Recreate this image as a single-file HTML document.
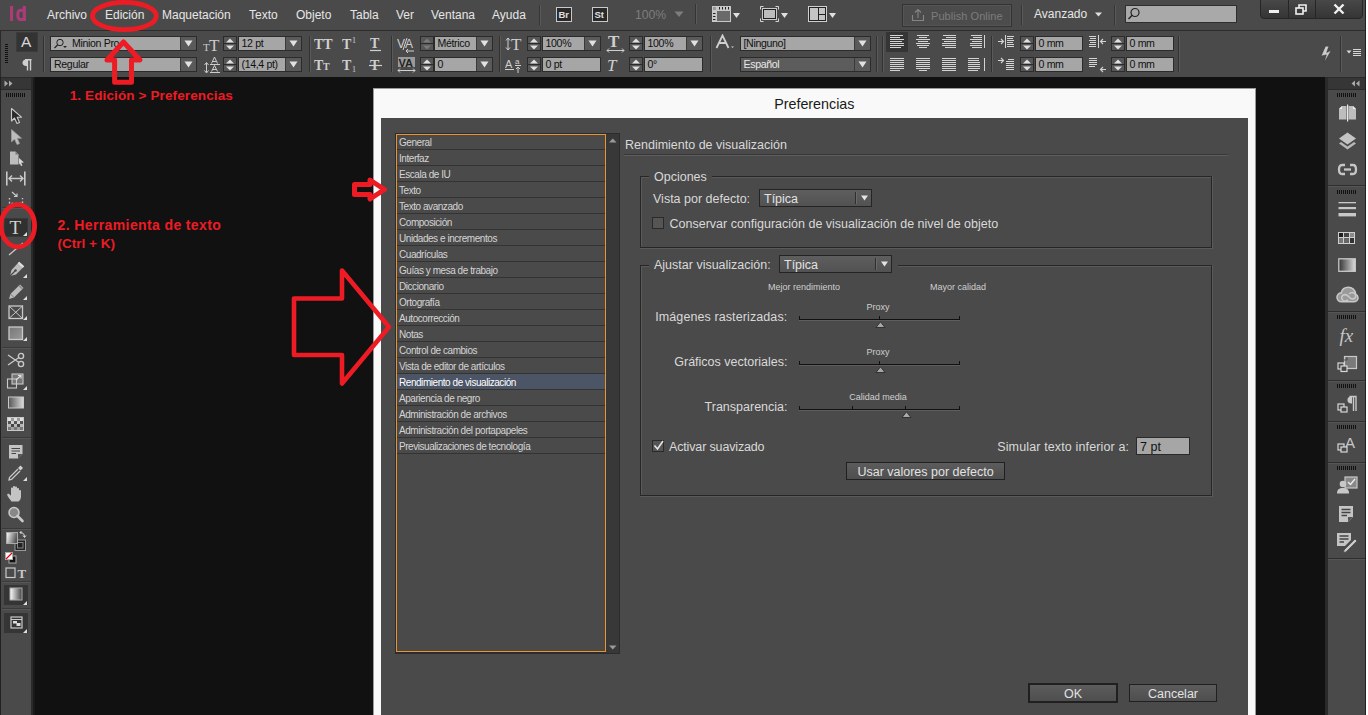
<!DOCTYPE html><html><head><meta charset="utf-8"><style>body{margin:0;width:1368px;height:715px;overflow:hidden;position:relative;background:#111;font-family:"Liberation Sans",sans-serif}</style></head><body><div style="position:absolute;left:0px;top:0px;width:1368px;height:30px;background:#4a4a4a"></div>
<div style="position:absolute;left:0px;top:30px;width:1368px;height:1px;background:#2c2c2c"></div>
<svg style="position:absolute;left:8px;top:4px;" width="22" height="20" viewBox="0 0 22 20"><rect x="2" y="2" width="3.1" height="15" fill="#ad3b78"/><rect x="14.8" y="2" width="3.1" height="15" fill="#ad3b78"/><path d="M15.5 6.2H12.5C10.5 6.2 9.8 8.5 9.8 11C9.8 13.8 10.8 15.6 12.8 15.6H15.5" fill="none" stroke="#ad3b78" stroke-width="3"/></svg>
<div style="position:absolute;left:47px;top:8.84px;font-size:12px;line-height:12px;color:#e6e6e6;font-weight:normal;letter-spacing:0px;white-space:pre;">Archivo</div>
<div style="position:absolute;left:105px;top:8.84px;font-size:12px;line-height:12px;color:#e6e6e6;font-weight:normal;letter-spacing:0px;white-space:pre;">Edición</div>
<div style="position:absolute;left:162px;top:8.84px;font-size:12px;line-height:12px;color:#e6e6e6;font-weight:normal;letter-spacing:0px;white-space:pre;">Maquetación</div>
<div style="position:absolute;left:249px;top:8.84px;font-size:12px;line-height:12px;color:#e6e6e6;font-weight:normal;letter-spacing:0px;white-space:pre;">Texto</div>
<div style="position:absolute;left:296px;top:8.84px;font-size:12px;line-height:12px;color:#e6e6e6;font-weight:normal;letter-spacing:0px;white-space:pre;">Objeto</div>
<div style="position:absolute;left:350px;top:8.84px;font-size:12px;line-height:12px;color:#e6e6e6;font-weight:normal;letter-spacing:0px;white-space:pre;">Tabla</div>
<div style="position:absolute;left:396px;top:8.84px;font-size:12px;line-height:12px;color:#e6e6e6;font-weight:normal;letter-spacing:0px;white-space:pre;">Ver</div>
<div style="position:absolute;left:431px;top:8.84px;font-size:12px;line-height:12px;color:#e6e6e6;font-weight:normal;letter-spacing:0px;white-space:pre;">Ventana</div>
<div style="position:absolute;left:492px;top:8.84px;font-size:12px;line-height:12px;color:#e6e6e6;font-weight:normal;letter-spacing:0px;white-space:pre;">Ayuda</div>
<div style="position:absolute;left:539px;top:5px;width:1px;height:20px;background:#353535"></div>
<div style="position:absolute;left:540px;top:5px;width:1px;height:20px;background:#5a5a5a"></div>
<div style="position:absolute;left:556px;top:7px;width:16px;height:15px;background:#c9c9c9"></div>
<div style="position:absolute;left:557px;top:8px;width:14px;height:13px;background:#2a2a2a"></div>
<div style="position:absolute;left:558.5px;top:10.46px;font-size:9.5px;line-height:9.5px;color:#e0e0e0;font-weight:bold;letter-spacing:0px;white-space:pre;">Br</div>
<div style="position:absolute;left:592px;top:7px;width:16px;height:15px;background:#c9c9c9"></div>
<div style="position:absolute;left:593px;top:8px;width:14px;height:13px;background:#2a2a2a"></div>
<div style="position:absolute;left:594.5px;top:10.46px;font-size:9.5px;line-height:9.5px;color:#e0e0e0;font-weight:bold;letter-spacing:0px;white-space:pre;">St</div>
<div style="position:absolute;left:635px;top:9.17px;font-size:12.2px;line-height:12.2px;color:#7d7d7d;font-weight:normal;letter-spacing:0px;white-space:pre;">100%</div>
<svg style="position:absolute;left:674px;top:11px;" width="10" height="7" viewBox="0 0 10 7"><path d="M0.5 0.5H9.5L5 6Z" fill="#7d7d7d"/></svg>
<div style="position:absolute;left:695px;top:4px;width:1px;height:20px;background:#353535"></div>
<div style="position:absolute;left:696px;top:4px;width:1px;height:20px;background:#5a5a5a"></div>
<svg style="position:absolute;left:712px;top:6px;" width="30" height="17" viewBox="0 0 30 17"><rect x="0" y="0" width="19" height="16" fill="#c8c8c8"/><rect x="5" y="5" width="13" height="10" fill="#6a6a6a"/><rect x="1" y="1" width="3" height="3" fill="#999"/><path d="M7.5 1V3.5M10.5 1V3.5M13.5 1V3.5M16.5 1V3.5M1 7.5H3.5M1 10.5H3.5M1 13.5H3.5" stroke="#222" stroke-width="1"/><path d="M21 7H28L24.5 12Z" fill="#e0e0e0"/></svg>
<svg style="position:absolute;left:760px;top:6px;" width="30" height="17" viewBox="0 0 30 17"><path d="M0.5 3.5V0.5H3.5M15.5 0.5H18.5V3.5M18.5 12.5V15.5H15.5M3.5 15.5H0.5V12.5" stroke="#d8d8d8" fill="none" stroke-width="1"/><rect x="2" y="2" width="15" height="12" fill="#c8c8c8"/><rect x="3" y="3" width="13" height="10" fill="#222"/><rect x="4" y="4" width="11" height="8" fill="#bcbcbc"/><path d="M21 7H28L24.5 12Z" fill="#e0e0e0"/></svg>
<svg style="position:absolute;left:808px;top:6px;" width="30" height="17" viewBox="0 0 30 17"><rect x="0" y="0" width="19" height="16" fill="#d0d0d0"/><rect x="1" y="1" width="17" height="14" fill="#222"/><rect x="2" y="2" width="8" height="12" fill="#c4c4c4"/><rect x="11" y="2" width="6" height="6" fill="#c4c4c4"/><rect x="11" y="9" width="6" height="5" fill="#c4c4c4"/><path d="M21 7H28L24.5 12Z" fill="#e0e0e0"/></svg>
<div style="position:absolute;left:902px;top:4px;width:110px;height:23px;background:#4c4c4c;box-shadow:inset 0 0 0 1px #333, inset 0 0 0 2px #555"></div>
<svg style="position:absolute;left:911px;top:8px;" width="14" height="14" viewBox="0 0 14 14"><path d="M1.5 7V12.5H12.5V7" stroke="#858585" fill="none" stroke-width="1.1"/><path d="M7 10V1.5M4 4.5L7 1.5L10 4.5" stroke="#858585" fill="none" stroke-width="1.1"/></svg>
<div style="position:absolute;left:931px;top:11.19px;font-size:11px;line-height:11px;color:#7c7c7c;font-weight:normal;letter-spacing:0.05px;white-space:pre;">Publish Online</div>
<div style="position:absolute;left:1021px;top:5px;width:1px;height:20px;background:#353535"></div>
<div style="position:absolute;left:1022px;top:5px;width:1px;height:20px;background:#5a5a5a"></div>
<div style="position:absolute;left:1034px;top:8.34px;font-size:12px;line-height:12px;color:#e6e6e6;font-weight:normal;letter-spacing:0px;white-space:pre;">Avanzado</div>
<svg style="position:absolute;left:1095px;top:12px;" width="8" height="5" viewBox="0 0 8 5"><path d="M0 0.5H7L3.5 4.5Z" fill="#e0e0e0"/></svg>
<div style="position:absolute;left:1114px;top:5px;width:1px;height:20px;background:#353535"></div>
<div style="position:absolute;left:1115px;top:5px;width:1px;height:20px;background:#5a5a5a"></div>
<div style="position:absolute;left:1125px;top:5px;width:112px;height:18px;background:#2e2e2e"></div>
<div style="position:absolute;left:1126px;top:6px;width:110px;height:16px;background:#a9a9a9"></div>
<svg style="position:absolute;left:1127px;top:7px;" width="14" height="14" viewBox="0 0 14 14"><circle cx="8" cy="5.5" r="4" fill="none" stroke="#222" stroke-width="1.2"/><path d="M5.2 8.3L1.5 12" stroke="#222" stroke-width="1.4"/></svg>
<div style="position:absolute;left:1260px;top:-3px;width:101px;height:20px;background:linear-gradient(#4a4a4a,#353535);border:1px solid #262626;border-radius:0 0 4px 4px"></div>
<div style="position:absolute;left:1288px;top:0px;width:1px;height:18px;background:#262626"></div>
<div style="position:absolute;left:1315px;top:0px;width:1px;height:18px;background:#262626"></div>
<div style="position:absolute;left:1269px;top:10px;width:10px;height:3px;background:#f0f0f0"></div>
<svg style="position:absolute;left:1295px;top:4px;" width="14" height="12" viewBox="0 0 14 12"><rect x="1" y="4" width="7" height="6" fill="none" stroke="#f0f0f0" stroke-width="1.6"/><path d="M4 4V1H11V7H8" fill="none" stroke="#f0f0f0" stroke-width="1.6"/></svg>
<svg style="position:absolute;left:1333px;top:3px;" width="12" height="12" viewBox="0 0 12 12"><path d="M1.5 1.5L10.5 10.5M10.5 1.5L1.5 10.5" stroke="#f0f0f0" stroke-width="2.4"/></svg>
<div style="position:absolute;left:0px;top:31px;width:1368px;height:46px;background:#4a4a4a"></div>
<div style="position:absolute;left:5px;top:44px;width:3px;height:1px;background:#111"></div>
<div style="position:absolute;left:5px;top:46px;width:3px;height:1px;background:#111"></div>
<div style="position:absolute;left:5px;top:48px;width:3px;height:1px;background:#111"></div>
<div style="position:absolute;left:5px;top:50px;width:3px;height:1px;background:#111"></div>
<div style="position:absolute;left:5px;top:52px;width:3px;height:1px;background:#111"></div>
<div style="position:absolute;left:5px;top:54px;width:3px;height:1px;background:#111"></div>
<div style="position:absolute;left:5px;top:56px;width:3px;height:1px;background:#111"></div>
<div style="position:absolute;left:5px;top:58px;width:3px;height:1px;background:#111"></div>
<div style="position:absolute;left:5px;top:60px;width:3px;height:1px;background:#111"></div>
<div style="position:absolute;left:5px;top:62px;width:3px;height:1px;background:#111"></div>
<div style="position:absolute;left:0px;top:31px;width:1px;height:46px;background:#2a2a2a"></div>
<div style="position:absolute;left:16px;top:32px;width:22px;height:20px;background:#333;box-shadow:inset 0 0 0 1px #3b3b3b"></div>
<div style="position:absolute;left:21px;top:34.48px;font-size:15.5px;line-height:15.5px;color:#d8d8d8;font-weight:normal;letter-spacing:0px;white-space:pre;">A</div>
<svg style="position:absolute;left:22px;top:59px;" width="10" height="12" viewBox="0 0 10 12"><path d="M5 0.5C1.5 0.5 0.5 2 0.5 3.8C0.5 5.6 1.5 7 5 7Z" fill="#cfcfcf"/><path d="M3 0.8H9.5M5.5 0.8V11.5M8.5 0.8V11.5" stroke="#cfcfcf" stroke-width="1.4" fill="none"/></svg>
<div style="position:absolute;left:43px;top:36px;width:1px;height:36px;background:#333"></div>
<div style="position:absolute;left:44px;top:36px;width:1px;height:36px;background:#5a5a5a"></div>
<div style="position:absolute;left:50px;top:36px;width:147px;height:15px;background:#2b2b2b"></div>
<div style="position:absolute;left:51px;top:37px;width:145px;height:13px;background:#a6a6a6"></div>
<div style="position:absolute;left:180px;top:37px;width:16px;height:13px;background:#5a5a5a"></div>
<div style="position:absolute;left:180px;top:37px;width:1px;height:13px;background:#3a3a3a"></div>
<svg style="position:absolute;left:184px;top:40px;" width="9" height="7" viewBox="0 0 9 7"><path d="M0.5 0.5H8.5L4.5 6.5Z" fill="#e2e2e2"/></svg>
<div style="position:absolute;left:72px;top:38.03px;font-size:10.6px;line-height:10.6px;color:#111;font-weight:normal;letter-spacing:-0.35px;white-space:pre;">Minion Pro</div>
<svg style="position:absolute;left:53px;top:38px;" width="16" height="11" viewBox="0 0 16 11"><circle cx="7" cy="4.5" r="3.2" fill="none" stroke="#222" stroke-width="1"/><path d="M4.8 6.8L1.5 10" stroke="#222" stroke-width="1.2"/><path d="M10 8H14L12 10Z" fill="#222"/></svg>
<div style="position:absolute;left:50px;top:57px;width:147px;height:15px;background:#2b2b2b"></div>
<div style="position:absolute;left:51px;top:58px;width:145px;height:13px;background:#a6a6a6"></div>
<div style="position:absolute;left:180px;top:58px;width:16px;height:13px;background:#5a5a5a"></div>
<div style="position:absolute;left:180px;top:58px;width:1px;height:13px;background:#3a3a3a"></div>
<svg style="position:absolute;left:184px;top:61px;" width="9" height="7" viewBox="0 0 9 7"><path d="M0.5 0.5H8.5L4.5 6.5Z" fill="#e2e2e2"/></svg>
<div style="position:absolute;left:54px;top:59.03px;font-size:10.6px;line-height:10.6px;color:#111;font-weight:normal;letter-spacing:-0.35px;white-space:pre;">Regular</div>
<svg style="position:absolute;left:203px;top:37px;" width="19" height="15" viewBox="0 0 19 15"><text x="0" y="14" font-family="Liberation Serif" font-size="11" fill="#ccc">T</text><text x="6" y="14" font-family="Liberation Serif" font-size="17" fill="#ccc">T</text></svg>
<svg style="position:absolute;left:203px;top:56px;" width="19" height="18" viewBox="0 0 19 18"><path d="M3.5 7V16.5M1.5 9L3.5 6.5L5.5 9M1.5 14.5L3.5 17L5.5 14.5" stroke="#ccc" fill="none" stroke-width="1"/><path d="M8.5 7.5L11.5 1L14.5 7.5M9.5 5.5H13.5" stroke="#ccc" fill="none" stroke-width="1"/><path d="M7 8.5H17M7 16.5H17" stroke="#ccc" stroke-width="1"/><path d="M8.5 15.5L11.5 9.5L14.5 15.5M9.5 13.5H13.5" stroke="#ccc" fill="none" stroke-width="1"/></svg>
<div style="position:absolute;left:223px;top:36px;width:14px;height:15px;background:#2b2b2b"></div>
<div style="position:absolute;left:224px;top:37px;width:12px;height:6px;background:#575757"></div>
<div style="position:absolute;left:224px;top:44px;width:12px;height:6px;background:#575757"></div>
<svg style="position:absolute;left:226px;top:38px;" width="8" height="5" viewBox="0 0 8 5"><path d="M0 4.5H8L4 0.5Z" fill="#e0e0e0"/></svg>
<svg style="position:absolute;left:226px;top:45px;" width="8" height="5" viewBox="0 0 8 5"><path d="M0 0.5H8L4 4.5Z" fill="#e0e0e0"/></svg>
<div style="position:absolute;left:223px;top:57px;width:14px;height:15px;background:#2b2b2b"></div>
<div style="position:absolute;left:224px;top:58px;width:12px;height:6px;background:#575757"></div>
<div style="position:absolute;left:224px;top:65px;width:12px;height:6px;background:#575757"></div>
<svg style="position:absolute;left:226px;top:59px;" width="8" height="5" viewBox="0 0 8 5"><path d="M0 4.5H8L4 0.5Z" fill="#e0e0e0"/></svg>
<svg style="position:absolute;left:226px;top:66px;" width="8" height="5" viewBox="0 0 8 5"><path d="M0 0.5H8L4 4.5Z" fill="#e0e0e0"/></svg>
<div style="position:absolute;left:238px;top:36px;width:64px;height:15px;background:#2b2b2b"></div>
<div style="position:absolute;left:239px;top:37px;width:62px;height:13px;background:#a6a6a6"></div>
<div style="position:absolute;left:285px;top:37px;width:16px;height:13px;background:#5a5a5a"></div>
<div style="position:absolute;left:285px;top:37px;width:1px;height:13px;background:#3a3a3a"></div>
<svg style="position:absolute;left:289px;top:40px;" width="9" height="7" viewBox="0 0 9 7"><path d="M0.5 0.5H8.5L4.5 6.5Z" fill="#e2e2e2"/></svg>
<div style="position:absolute;left:241.5px;top:38.03px;font-size:10.6px;line-height:10.6px;color:#111;font-weight:normal;letter-spacing:-0.35px;white-space:pre;">12 pt</div>
<div style="position:absolute;left:238px;top:57px;width:64px;height:15px;background:#2b2b2b"></div>
<div style="position:absolute;left:239px;top:58px;width:62px;height:13px;background:#a6a6a6"></div>
<div style="position:absolute;left:285px;top:58px;width:16px;height:13px;background:#5a5a5a"></div>
<div style="position:absolute;left:285px;top:58px;width:1px;height:13px;background:#3a3a3a"></div>
<svg style="position:absolute;left:289px;top:61px;" width="9" height="7" viewBox="0 0 9 7"><path d="M0.5 0.5H8.5L4.5 6.5Z" fill="#e2e2e2"/></svg>
<div style="position:absolute;left:241.5px;top:59.03px;font-size:10.6px;line-height:10.6px;color:#111;font-weight:normal;letter-spacing:-0.35px;white-space:pre;">(14,4 pt)</div>
<div style="position:absolute;left:309px;top:36px;width:1px;height:36px;background:#333"></div>
<div style="position:absolute;left:310px;top:36px;width:1px;height:36px;background:#5a5a5a"></div>
<svg style="position:absolute;left:314px;top:36px;" width="20" height="16" viewBox="0 0 20 16"><text x="0" y="13" font-family="Liberation Serif" font-size="14" fill="#cfcfcf" font-weight="bold">TT</text></svg>
<svg style="position:absolute;left:342px;top:36px;" width="20" height="16" viewBox="0 0 20 16"><text x="0" y="13" font-family="Liberation Serif" font-size="14" fill="#cfcfcf" font-weight="bold">T</text><text x="10" y="7" font-family="Liberation Serif" font-size="8" fill="#cfcfcf">1</text></svg>
<svg style="position:absolute;left:369px;top:36px;" width="16" height="16" viewBox="0 0 16 16"><text x="1" y="12" font-family="Liberation Serif" font-size="14" fill="#cfcfcf" font-weight="bold">T</text><path d="M1 14.5H12" stroke="#cfcfcf" stroke-width="1.2"/></svg>
<svg style="position:absolute;left:314px;top:57px;" width="20" height="16" viewBox="0 0 20 16"><text x="0" y="13" font-family="Liberation Serif" font-size="14" fill="#cfcfcf" font-weight="bold">T</text><text x="9" y="13" font-family="Liberation Serif" font-size="10" fill="#cfcfcf" font-weight="bold">T</text></svg>
<svg style="position:absolute;left:342px;top:57px;" width="20" height="16" viewBox="0 0 20 16"><text x="0" y="13" font-family="Liberation Serif" font-size="14" fill="#cfcfcf" font-weight="bold">T</text><text x="10" y="15" font-family="Liberation Serif" font-size="8" fill="#cfcfcf">1</text></svg>
<svg style="position:absolute;left:369px;top:57px;" width="16" height="16" viewBox="0 0 16 16"><text x="1" y="13" font-family="Liberation Serif" font-size="14" fill="#cfcfcf" font-weight="bold">T</text><path d="M0 8.5H13" stroke="#cfcfcf" stroke-width="1.2"/></svg>
<div style="position:absolute;left:391px;top:36px;width:1px;height:36px;background:#333"></div>
<div style="position:absolute;left:392px;top:36px;width:1px;height:36px;background:#5a5a5a"></div>
<svg style="position:absolute;left:397px;top:36px;" width="20" height="17" viewBox="0 0 20 17"><text x="0" y="12" font-family="Liberation Sans" font-size="12" fill="#cfcfcf">V</text><text x="8" y="12" font-family="Liberation Sans" font-size="12" fill="#cfcfcf">A</text><path d="M6 14L10 2" stroke="#cfcfcf" stroke-width="1"/><path d="M17 15H9M11 13L9 15L11 17" stroke="#cfcfcf" fill="none" stroke-width="1"/></svg>
<svg style="position:absolute;left:397px;top:56px;" width="20" height="17" viewBox="0 0 20 17"><rect x="1" y="1" width="17" height="10" fill="#9a9a9a"/><text x="1.5" y="10.5" font-family="Liberation Sans" font-size="11" font-weight="bold" fill="#222">VA</text><path d="M1 14.5H18M3 12.5L1 14.5L3 16.5M16 12.5L18 14.5L16 16.5" stroke="#cfcfcf" fill="none" stroke-width="1"/></svg>
<div style="position:absolute;left:420px;top:36px;width:14px;height:15px;background:#2b2b2b"></div>
<div style="position:absolute;left:421px;top:37px;width:12px;height:6px;background:#575757"></div>
<div style="position:absolute;left:421px;top:44px;width:12px;height:6px;background:#575757"></div>
<svg style="position:absolute;left:423px;top:38px;" width="8" height="5" viewBox="0 0 8 5"><path d="M0 4.5H8L4 0.5Z" fill="#7a7a7a"/></svg>
<svg style="position:absolute;left:423px;top:45px;" width="8" height="5" viewBox="0 0 8 5"><path d="M0 0.5H8L4 4.5Z" fill="#7a7a7a"/></svg>
<div style="position:absolute;left:420px;top:57px;width:14px;height:15px;background:#2b2b2b"></div>
<div style="position:absolute;left:421px;top:58px;width:12px;height:6px;background:#575757"></div>
<div style="position:absolute;left:421px;top:65px;width:12px;height:6px;background:#575757"></div>
<svg style="position:absolute;left:423px;top:59px;" width="8" height="5" viewBox="0 0 8 5"><path d="M0 4.5H8L4 0.5Z" fill="#e0e0e0"/></svg>
<svg style="position:absolute;left:423px;top:66px;" width="8" height="5" viewBox="0 0 8 5"><path d="M0 0.5H8L4 4.5Z" fill="#e0e0e0"/></svg>
<div style="position:absolute;left:434px;top:36px;width:59px;height:15px;background:#2b2b2b"></div>
<div style="position:absolute;left:435px;top:37px;width:57px;height:13px;background:#a6a6a6"></div>
<div style="position:absolute;left:476px;top:37px;width:16px;height:13px;background:#5a5a5a"></div>
<div style="position:absolute;left:476px;top:37px;width:1px;height:13px;background:#3a3a3a"></div>
<svg style="position:absolute;left:480px;top:40px;" width="9" height="7" viewBox="0 0 9 7"><path d="M0.5 0.5H8.5L4.5 6.5Z" fill="#e2e2e2"/></svg>
<div style="position:absolute;left:437.5px;top:38.03px;font-size:10.6px;line-height:10.6px;color:#111;font-weight:normal;letter-spacing:-0.35px;white-space:pre;">Métrico</div>
<div style="position:absolute;left:434px;top:57px;width:59px;height:15px;background:#2b2b2b"></div>
<div style="position:absolute;left:435px;top:58px;width:57px;height:13px;background:#a6a6a6"></div>
<div style="position:absolute;left:476px;top:58px;width:16px;height:13px;background:#5a5a5a"></div>
<div style="position:absolute;left:476px;top:58px;width:1px;height:13px;background:#3a3a3a"></div>
<svg style="position:absolute;left:480px;top:61px;" width="9" height="7" viewBox="0 0 9 7"><path d="M0.5 0.5H8.5L4.5 6.5Z" fill="#e2e2e2"/></svg>
<div style="position:absolute;left:437.5px;top:59.03px;font-size:10.6px;line-height:10.6px;color:#111;font-weight:normal;letter-spacing:-0.35px;white-space:pre;">0</div>
<div style="position:absolute;left:499px;top:36px;width:1px;height:36px;background:#333"></div>
<div style="position:absolute;left:500px;top:36px;width:1px;height:36px;background:#5a5a5a"></div>
<svg style="position:absolute;left:505px;top:36px;" width="20" height="16" viewBox="0 0 20 16"><path d="M3 2V14M1 4.5L3 2L5 4.5M1 11.5L3 14L5 11.5" stroke="#cfcfcf" fill="none" stroke-width="1"/><text x="6" y="14" font-family="Liberation Serif" font-size="17" fill="#cfcfcf">T</text></svg>
<svg style="position:absolute;left:505px;top:57px;" width="20" height="16" viewBox="0 0 20 16"><text x="0" y="11" font-family="Liberation Sans" font-size="11" fill="#cfcfcf">A</text><text x="10" y="7" font-family="Liberation Sans" font-size="8" fill="#cfcfcf">a</text><path d="M0 12.5H9M10 8.5H16M13 10V16M11 12L13 10L15 12" stroke="#cfcfcf" fill="none" stroke-width="1"/></svg>
<div style="position:absolute;left:527px;top:36px;width:14px;height:15px;background:#2b2b2b"></div>
<div style="position:absolute;left:528px;top:37px;width:12px;height:6px;background:#575757"></div>
<div style="position:absolute;left:528px;top:44px;width:12px;height:6px;background:#575757"></div>
<svg style="position:absolute;left:530px;top:38px;" width="8" height="5" viewBox="0 0 8 5"><path d="M0 4.5H8L4 0.5Z" fill="#e0e0e0"/></svg>
<svg style="position:absolute;left:530px;top:45px;" width="8" height="5" viewBox="0 0 8 5"><path d="M0 0.5H8L4 4.5Z" fill="#e0e0e0"/></svg>
<div style="position:absolute;left:527px;top:57px;width:14px;height:15px;background:#2b2b2b"></div>
<div style="position:absolute;left:528px;top:58px;width:12px;height:6px;background:#575757"></div>
<div style="position:absolute;left:528px;top:65px;width:12px;height:6px;background:#575757"></div>
<svg style="position:absolute;left:530px;top:59px;" width="8" height="5" viewBox="0 0 8 5"><path d="M0 4.5H8L4 0.5Z" fill="#e0e0e0"/></svg>
<svg style="position:absolute;left:530px;top:66px;" width="8" height="5" viewBox="0 0 8 5"><path d="M0 0.5H8L4 4.5Z" fill="#e0e0e0"/></svg>
<div style="position:absolute;left:542px;top:36px;width:59px;height:15px;background:#2b2b2b"></div>
<div style="position:absolute;left:543px;top:37px;width:57px;height:13px;background:#a6a6a6"></div>
<div style="position:absolute;left:584px;top:37px;width:16px;height:13px;background:#5a5a5a"></div>
<div style="position:absolute;left:584px;top:37px;width:1px;height:13px;background:#3a3a3a"></div>
<svg style="position:absolute;left:588px;top:40px;" width="9" height="7" viewBox="0 0 9 7"><path d="M0.5 0.5H8.5L4.5 6.5Z" fill="#e2e2e2"/></svg>
<div style="position:absolute;left:545.5px;top:38.03px;font-size:10.6px;line-height:10.6px;color:#111;font-weight:normal;letter-spacing:-0.35px;white-space:pre;">100%</div>
<div style="position:absolute;left:542px;top:57px;width:59px;height:15px;background:#2b2b2b"></div>
<div style="position:absolute;left:543px;top:58px;width:57px;height:13px;background:#a6a6a6"></div>
<div style="position:absolute;left:545.5px;top:59.03px;font-size:10.6px;line-height:10.6px;color:#111;font-weight:normal;letter-spacing:-0.35px;white-space:pre;">0 pt</div>
<svg style="position:absolute;left:606px;top:34px;" width="20" height="20" viewBox="0 0 20 20"><text x="2" y="13" font-family="Liberation Serif" font-size="17" fill="#cfcfcf" font-weight="bold">T</text><path d="M1 16.5H18M3 14.5L1 16.5L3 18.5M16 14.5L18 16.5L16 18.5" stroke="#cfcfcf" fill="none" stroke-width="1"/></svg>
<svg style="position:absolute;left:606px;top:56px;" width="20" height="17" viewBox="0 0 20 17"><text x="1" y="15" font-family="Liberation Serif" font-size="17" font-style="italic" fill="#cfcfcf">T</text></svg>
<div style="position:absolute;left:629px;top:36px;width:14px;height:15px;background:#2b2b2b"></div>
<div style="position:absolute;left:630px;top:37px;width:12px;height:6px;background:#575757"></div>
<div style="position:absolute;left:630px;top:44px;width:12px;height:6px;background:#575757"></div>
<svg style="position:absolute;left:632px;top:38px;" width="8" height="5" viewBox="0 0 8 5"><path d="M0 4.5H8L4 0.5Z" fill="#e0e0e0"/></svg>
<svg style="position:absolute;left:632px;top:45px;" width="8" height="5" viewBox="0 0 8 5"><path d="M0 0.5H8L4 4.5Z" fill="#e0e0e0"/></svg>
<div style="position:absolute;left:629px;top:57px;width:14px;height:15px;background:#2b2b2b"></div>
<div style="position:absolute;left:630px;top:58px;width:12px;height:6px;background:#575757"></div>
<div style="position:absolute;left:630px;top:65px;width:12px;height:6px;background:#575757"></div>
<svg style="position:absolute;left:632px;top:59px;" width="8" height="5" viewBox="0 0 8 5"><path d="M0 4.5H8L4 0.5Z" fill="#e0e0e0"/></svg>
<svg style="position:absolute;left:632px;top:66px;" width="8" height="5" viewBox="0 0 8 5"><path d="M0 0.5H8L4 4.5Z" fill="#e0e0e0"/></svg>
<div style="position:absolute;left:644px;top:36px;width:59px;height:15px;background:#2b2b2b"></div>
<div style="position:absolute;left:645px;top:37px;width:57px;height:13px;background:#a6a6a6"></div>
<div style="position:absolute;left:686px;top:37px;width:16px;height:13px;background:#5a5a5a"></div>
<div style="position:absolute;left:686px;top:37px;width:1px;height:13px;background:#3a3a3a"></div>
<svg style="position:absolute;left:690px;top:40px;" width="9" height="7" viewBox="0 0 9 7"><path d="M0.5 0.5H8.5L4.5 6.5Z" fill="#e2e2e2"/></svg>
<div style="position:absolute;left:647.5px;top:38.03px;font-size:10.6px;line-height:10.6px;color:#111;font-weight:normal;letter-spacing:-0.35px;white-space:pre;">100%</div>
<div style="position:absolute;left:644px;top:57px;width:59px;height:15px;background:#2b2b2b"></div>
<div style="position:absolute;left:645px;top:58px;width:57px;height:13px;background:#a6a6a6"></div>
<div style="position:absolute;left:647.5px;top:59.03px;font-size:10.6px;line-height:10.6px;color:#111;font-weight:normal;letter-spacing:-0.35px;white-space:pre;">0°</div>
<div style="position:absolute;left:710px;top:36px;width:1px;height:36px;background:#333"></div>
<div style="position:absolute;left:711px;top:36px;width:1px;height:36px;background:#5a5a5a"></div>
<svg style="position:absolute;left:715px;top:34px;" width="22" height="16" viewBox="0 0 22 16"><path d="M1.5 14L7.5 1.5L13.5 14M4 9H11" fill="none" stroke="#cfcfcf" stroke-width="1.8"/><path d="M16 12.5H19L17.5 14Z" fill="#cfcfcf"/></svg>
<div style="position:absolute;left:740px;top:36px;width:131px;height:15px;background:#2b2b2b"></div>
<div style="position:absolute;left:741px;top:37px;width:129px;height:13px;background:#a6a6a6"></div>
<div style="position:absolute;left:854px;top:37px;width:16px;height:13px;background:#5a5a5a"></div>
<div style="position:absolute;left:854px;top:37px;width:1px;height:13px;background:#3a3a3a"></div>
<svg style="position:absolute;left:858px;top:40px;" width="9" height="7" viewBox="0 0 9 7"><path d="M0.5 0.5H8.5L4.5 6.5Z" fill="#e2e2e2"/></svg>
<div style="position:absolute;left:743.5px;top:38.03px;font-size:10.6px;line-height:10.6px;color:#111;font-weight:normal;letter-spacing:-0.35px;white-space:pre;">[Ninguno]</div>
<div style="position:absolute;left:740px;top:57px;width:131px;height:15px;background:#2b2b2b"></div>
<div style="position:absolute;left:741px;top:58px;width:129px;height:13px;background:#5c5c5c"></div>
<div style="position:absolute;left:854px;top:58px;width:16px;height:13px;background:#5a5a5a"></div>
<div style="position:absolute;left:854px;top:58px;width:1px;height:13px;background:#3a3a3a"></div>
<svg style="position:absolute;left:858px;top:61px;" width="9" height="7" viewBox="0 0 9 7"><path d="M0.5 0.5H8.5L4.5 6.5Z" fill="#e2e2e2"/></svg>
<div style="position:absolute;left:743.5px;top:59.03px;font-size:10.6px;line-height:10.6px;color:#e8e8e8;font-weight:normal;letter-spacing:-0.35px;white-space:pre;">Español</div>
<div style="position:absolute;left:876px;top:36px;width:1px;height:36px;background:#333"></div>
<div style="position:absolute;left:877px;top:36px;width:1px;height:36px;background:#5a5a5a"></div>
<div style="position:absolute;left:882px;top:36px;width:1px;height:36px;background:#333"></div>
<div style="position:absolute;left:883px;top:36px;width:1px;height:36px;background:#5a5a5a"></div>
<div style="position:absolute;left:886px;top:32px;width:22px;height:20px;background:#353535"></div>
<svg style="position:absolute;left:890px;top:35px;" width="18" height="14" viewBox="0 0 18 14"><rect x="0" y="0" width="13" height="1" fill="#d4d4d4"/><rect x="0" y="2" width="10" height="1" fill="#d4d4d4"/><rect x="0" y="4" width="14" height="1" fill="#d4d4d4"/><rect x="0" y="6" width="12" height="1" fill="#d4d4d4"/><rect x="0" y="8" width="14" height="1" fill="#d4d4d4"/><rect x="0" y="10" width="14" height="1" fill="#d4d4d4"/><rect x="0" y="12" width="11" height="1" fill="#d4d4d4"/></svg>
<svg style="position:absolute;left:916px;top:35px;" width="18" height="14" viewBox="0 0 18 14"><rect x="1.0" y="0" width="12" height="1" fill="#d4d4d4"/><rect x="3.0" y="2" width="8" height="1" fill="#d4d4d4"/><rect x="0.0" y="4" width="14" height="1" fill="#d4d4d4"/><rect x="2.0" y="6" width="10" height="1" fill="#d4d4d4"/><rect x="0.0" y="8" width="14" height="1" fill="#d4d4d4"/><rect x="1.0" y="10" width="12" height="1" fill="#d4d4d4"/><rect x="3.0" y="12" width="8" height="1" fill="#d4d4d4"/></svg>
<svg style="position:absolute;left:942px;top:35px;" width="18" height="14" viewBox="0 0 18 14"><rect x="1" y="0" width="13" height="1" fill="#d4d4d4"/><rect x="4" y="2" width="10" height="1" fill="#d4d4d4"/><rect x="0" y="4" width="14" height="1" fill="#d4d4d4"/><rect x="2" y="6" width="12" height="1" fill="#d4d4d4"/><rect x="0" y="8" width="14" height="1" fill="#d4d4d4"/><rect x="0" y="10" width="14" height="1" fill="#d4d4d4"/><rect x="3" y="12" width="11" height="1" fill="#d4d4d4"/></svg>
<svg style="position:absolute;left:968px;top:35px;" width="18" height="14" viewBox="0 0 18 14"><rect x="3" y="0" width="11" height="1" fill="#d4d4d4"/><rect x="5" y="2" width="9" height="1" fill="#d4d4d4"/><rect x="2" y="4" width="12" height="1" fill="#d4d4d4"/><rect x="4" y="6" width="10" height="1" fill="#d4d4d4"/><rect x="2" y="8" width="12" height="1" fill="#d4d4d4"/><rect x="2" y="10" width="12" height="1" fill="#d4d4d4"/><rect x="4" y="12" width="10" height="1" fill="#d4d4d4"/><rect x="16" y="0" width="1" height="13" fill="#d4d4d4"/></svg>
<svg style="position:absolute;left:890px;top:58px;" width="18" height="14" viewBox="0 0 18 14"><rect x="0" y="0" width="14" height="1" fill="#d4d4d4"/><rect x="0" y="2" width="14" height="1" fill="#d4d4d4"/><rect x="0" y="4" width="14" height="1" fill="#d4d4d4"/><rect x="0" y="6" width="14" height="1" fill="#d4d4d4"/><rect x="0" y="8" width="14" height="1" fill="#d4d4d4"/><rect x="0" y="10" width="14" height="1" fill="#d4d4d4"/><rect x="0" y="12" width="10" height="1" fill="#d4d4d4"/></svg>
<svg style="position:absolute;left:916px;top:58px;" width="18" height="14" viewBox="0 0 18 14"><rect x="0.0" y="0" width="14" height="1" fill="#d4d4d4"/><rect x="0.0" y="2" width="14" height="1" fill="#d4d4d4"/><rect x="0.0" y="4" width="14" height="1" fill="#d4d4d4"/><rect x="0.0" y="6" width="14" height="1" fill="#d4d4d4"/><rect x="0.0" y="8" width="14" height="1" fill="#d4d4d4"/><rect x="0.0" y="10" width="14" height="1" fill="#d4d4d4"/><rect x="3.0" y="12" width="8" height="1" fill="#d4d4d4"/></svg>
<svg style="position:absolute;left:942px;top:58px;" width="18" height="14" viewBox="0 0 18 14"><rect x="0" y="0" width="14" height="1" fill="#d4d4d4"/><rect x="0" y="2" width="14" height="1" fill="#d4d4d4"/><rect x="0" y="4" width="14" height="1" fill="#d4d4d4"/><rect x="0" y="6" width="14" height="1" fill="#d4d4d4"/><rect x="0" y="8" width="14" height="1" fill="#d4d4d4"/><rect x="0" y="10" width="14" height="1" fill="#d4d4d4"/><rect x="0" y="12" width="14" height="1" fill="#d4d4d4"/></svg>
<svg style="position:absolute;left:968px;top:58px;" width="18" height="14" viewBox="0 0 18 14"><rect x="0" y="0" width="11" height="1" fill="#d4d4d4"/><rect x="0" y="2" width="11" height="1" fill="#d4d4d4"/><rect x="0" y="4" width="12" height="1" fill="#d4d4d4"/><rect x="0" y="6" width="12" height="1" fill="#d4d4d4"/><rect x="0" y="8" width="12" height="1" fill="#d4d4d4"/><rect x="0" y="10" width="12" height="1" fill="#d4d4d4"/><rect x="0" y="12" width="10" height="1" fill="#d4d4d4"/><rect x="16" y="0" width="1" height="13" fill="#d4d4d4"/></svg>
<div style="position:absolute;left:991px;top:36px;width:1px;height:36px;background:#333"></div>
<div style="position:absolute;left:992px;top:36px;width:1px;height:36px;background:#5a5a5a"></div>
<svg style="position:absolute;left:998px;top:35px;" width="18" height="14" viewBox="0 0 18 14"><path d="M0 6.5H5M3 4L5.5 6.5L3 9" stroke="#d4d4d4" fill="none" stroke-width="1.1"/><rect x="7" y="0" width="1" height="13" fill="#d4d4d4"/><rect x="9" y="1" width="7" height="1" fill="#d4d4d4"/><rect x="9" y="3" width="6" height="1" fill="#d4d4d4"/><rect x="9" y="5" width="7" height="1" fill="#d4d4d4"/><rect x="9" y="7" width="6" height="1" fill="#d4d4d4"/><rect x="9" y="9" width="7" height="1" fill="#d4d4d4"/><rect x="9" y="11" width="7" height="1" fill="#d4d4d4"/></svg>
<svg style="position:absolute;left:998px;top:57px;" width="18" height="15" viewBox="0 0 18 15"><path d="M0 3.5H5M3 1L5.5 3.5L3 6" stroke="#d4d4d4" fill="none" stroke-width="1.1"/><rect x="10" y="2" width="6" height="1" fill="#d4d4d4"/><rect x="8" y="4" width="8" height="1" fill="#d4d4d4"/><rect x="8" y="6" width="8" height="1" fill="#d4d4d4"/><rect x="8" y="8" width="8" height="1" fill="#d4d4d4"/><rect x="8" y="10" width="8" height="1" fill="#d4d4d4"/><rect x="8" y="12" width="8" height="1" fill="#d4d4d4"/></svg>
<div style="position:absolute;left:1020px;top:36px;width:14px;height:15px;background:#2b2b2b"></div>
<div style="position:absolute;left:1021px;top:37px;width:12px;height:6px;background:#575757"></div>
<div style="position:absolute;left:1021px;top:44px;width:12px;height:6px;background:#575757"></div>
<svg style="position:absolute;left:1023px;top:38px;" width="8" height="5" viewBox="0 0 8 5"><path d="M0 4.5H8L4 0.5Z" fill="#e0e0e0"/></svg>
<svg style="position:absolute;left:1023px;top:45px;" width="8" height="5" viewBox="0 0 8 5"><path d="M0 0.5H8L4 4.5Z" fill="#e0e0e0"/></svg>
<div style="position:absolute;left:1020px;top:57px;width:14px;height:15px;background:#2b2b2b"></div>
<div style="position:absolute;left:1021px;top:58px;width:12px;height:6px;background:#575757"></div>
<div style="position:absolute;left:1021px;top:65px;width:12px;height:6px;background:#575757"></div>
<svg style="position:absolute;left:1023px;top:59px;" width="8" height="5" viewBox="0 0 8 5"><path d="M0 4.5H8L4 0.5Z" fill="#e0e0e0"/></svg>
<svg style="position:absolute;left:1023px;top:66px;" width="8" height="5" viewBox="0 0 8 5"><path d="M0 0.5H8L4 4.5Z" fill="#e0e0e0"/></svg>
<div style="position:absolute;left:1035px;top:36px;width:48px;height:15px;background:#2b2b2b"></div>
<div style="position:absolute;left:1036px;top:37px;width:46px;height:13px;background:#a6a6a6"></div>
<div style="position:absolute;left:1038.5px;top:38.03px;font-size:10.6px;line-height:10.6px;color:#111;font-weight:normal;letter-spacing:-0.35px;white-space:pre;">0 mm</div>
<div style="position:absolute;left:1035px;top:57px;width:48px;height:15px;background:#2b2b2b"></div>
<div style="position:absolute;left:1036px;top:58px;width:46px;height:13px;background:#a6a6a6"></div>
<div style="position:absolute;left:1038.5px;top:59.03px;font-size:10.6px;line-height:10.6px;color:#111;font-weight:normal;letter-spacing:-0.35px;white-space:pre;">0 mm</div>
<svg style="position:absolute;left:1089px;top:35px;" width="18" height="14" viewBox="0 0 18 14"><rect x="0" y="1" width="7" height="1" fill="#d4d4d4"/><rect x="1" y="3" width="6" height="1" fill="#d4d4d4"/><rect x="0" y="5" width="7" height="1" fill="#d4d4d4"/><rect x="1" y="7" width="6" height="1" fill="#d4d4d4"/><rect x="0" y="9" width="7" height="1" fill="#d4d4d4"/><rect x="0" y="11" width="7" height="1" fill="#d4d4d4"/><rect x="9" y="0" width="1" height="13" fill="#d4d4d4"/><path d="M17 6.5H12M14 4L11.5 6.5L14 9" stroke="#d4d4d4" fill="none" stroke-width="1.1"/></svg>
<svg style="position:absolute;left:1089px;top:57px;" width="18" height="16" viewBox="0 0 18 16"><rect x="0" y="1" width="8" height="1" fill="#d4d4d4"/><rect x="0" y="3" width="8" height="1" fill="#d4d4d4"/><rect x="0" y="5" width="8" height="1" fill="#d4d4d4"/><rect x="0" y="7" width="8" height="1" fill="#d4d4d4"/><rect x="0" y="9" width="6" height="1" fill="#d4d4d4"/><path d="M17 12.5H12M14 10L11.5 12.5L14 15" stroke="#d4d4d4" fill="none" stroke-width="1.1"/></svg>
<div style="position:absolute;left:1111px;top:36px;width:14px;height:15px;background:#2b2b2b"></div>
<div style="position:absolute;left:1112px;top:37px;width:12px;height:6px;background:#575757"></div>
<div style="position:absolute;left:1112px;top:44px;width:12px;height:6px;background:#575757"></div>
<svg style="position:absolute;left:1114px;top:38px;" width="8" height="5" viewBox="0 0 8 5"><path d="M0 4.5H8L4 0.5Z" fill="#e0e0e0"/></svg>
<svg style="position:absolute;left:1114px;top:45px;" width="8" height="5" viewBox="0 0 8 5"><path d="M0 0.5H8L4 4.5Z" fill="#e0e0e0"/></svg>
<div style="position:absolute;left:1111px;top:57px;width:14px;height:15px;background:#2b2b2b"></div>
<div style="position:absolute;left:1112px;top:58px;width:12px;height:6px;background:#575757"></div>
<div style="position:absolute;left:1112px;top:65px;width:12px;height:6px;background:#575757"></div>
<svg style="position:absolute;left:1114px;top:59px;" width="8" height="5" viewBox="0 0 8 5"><path d="M0 4.5H8L4 0.5Z" fill="#e0e0e0"/></svg>
<svg style="position:absolute;left:1114px;top:66px;" width="8" height="5" viewBox="0 0 8 5"><path d="M0 0.5H8L4 4.5Z" fill="#e0e0e0"/></svg>
<div style="position:absolute;left:1126px;top:36px;width:48px;height:15px;background:#2b2b2b"></div>
<div style="position:absolute;left:1127px;top:37px;width:46px;height:13px;background:#a6a6a6"></div>
<div style="position:absolute;left:1129.5px;top:38.03px;font-size:10.6px;line-height:10.6px;color:#111;font-weight:normal;letter-spacing:-0.35px;white-space:pre;">0 mm</div>
<div style="position:absolute;left:1126px;top:57px;width:48px;height:15px;background:#2b2b2b"></div>
<div style="position:absolute;left:1127px;top:58px;width:46px;height:13px;background:#a6a6a6"></div>
<div style="position:absolute;left:1129.5px;top:59.03px;font-size:10.6px;line-height:10.6px;color:#111;font-weight:normal;letter-spacing:-0.35px;white-space:pre;">0 mm</div>
<div style="position:absolute;left:1178px;top:36px;width:1px;height:36px;background:#333"></div>
<div style="position:absolute;left:1179px;top:36px;width:1px;height:36px;background:#5a5a5a"></div>
<svg style="position:absolute;left:1320px;top:45px;" width="13" height="18" viewBox="0 0 13 18"><path d="M5.5 1.2H8.8L6.6 7.6L11.2 5.6L4.2 17.2L6.4 9.8L1.2 10.9Z" fill="#cdcdcd" stroke="#2c2c2c" stroke-width="0.4"/></svg>
<div style="position:absolute;left:1340px;top:36px;width:1px;height:36px;background:#333"></div>
<div style="position:absolute;left:1341px;top:36px;width:1px;height:36px;background:#5a5a5a"></div>
<svg style="position:absolute;left:1346px;top:48px;" width="16" height="9" viewBox="0 0 16 9"><path d="M0.5 2.5H5.5L3 5.5Z" fill="#d8d8d8"/><rect x="7" y="1" width="8" height="1" fill="#d8d8d8"/><rect x="7" y="3" width="8" height="1" fill="#d8d8d8"/><rect x="7" y="5" width="8" height="1" fill="#d8d8d8"/><rect x="7" y="7" width="8" height="1" fill="#d8d8d8"/></svg>
<div style="position:absolute;left:0px;top:77px;width:1368px;height:638px;background:#111"></div>
<div style="position:absolute;left:0px;top:77px;width:35px;height:638px;background:#1a1a1a"></div>
<div style="position:absolute;left:0px;top:77px;width:33px;height:638px;background:#2a2a2a"></div>
<div style="position:absolute;left:0px;top:77px;width:1px;height:638px;background:#222"></div>
<div style="position:absolute;left:1px;top:78px;width:30px;height:11px;background:#363636"></div>
<div style="position:absolute;left:1px;top:90px;width:30px;height:625px;background:#4a4a4a"></div>
<svg style="position:absolute;left:4px;top:80px;" width="10" height="7" viewBox="0 0 10 7"><path d="M0.5 0.5L4 3.5L0.5 6.5ZM5 0.5L8.5 3.5L5 6.5Z" fill="#aaa"/></svg>
<div style="position:absolute;left:6px;top:93px;width:1px;height:4px;background:#111"></div>
<div style="position:absolute;left:8px;top:93px;width:1px;height:4px;background:#111"></div>
<div style="position:absolute;left:10px;top:93px;width:1px;height:4px;background:#111"></div>
<div style="position:absolute;left:12px;top:93px;width:1px;height:4px;background:#111"></div>
<div style="position:absolute;left:14px;top:93px;width:1px;height:4px;background:#111"></div>
<div style="position:absolute;left:16px;top:93px;width:1px;height:4px;background:#111"></div>
<div style="position:absolute;left:18px;top:93px;width:1px;height:4px;background:#111"></div>
<div style="position:absolute;left:20px;top:93px;width:1px;height:4px;background:#111"></div>
<div style="position:absolute;left:22px;top:93px;width:1px;height:4px;background:#111"></div>
<div style="position:absolute;left:24px;top:93px;width:1px;height:4px;background:#111"></div>
<svg style="position:absolute;left:10px;top:107px;" width="13" height="18" viewBox="0 0 13 18"><path d="M1.5 1.5V14L4.5 11L7 16.5L9.5 15.5L7.2 10.2H11.5Z" fill="#2a2a2a" stroke="#c9c9c9" stroke-width="1.1" stroke-linejoin="round"/></svg>
<svg style="position:absolute;left:10px;top:128px;" width="13" height="18" viewBox="0 0 13 18"><path d="M1.5 1.5V14L4.5 11L7 16.5L9.5 15.5L7.2 10.2H11.5Z" fill="#bdbdbd" stroke="#9a9a9a" stroke-width="0.8"/></svg>
<svg style="position:absolute;left:9px;top:150px;" width="16" height="17" viewBox="0 0 16 17"><path d="M1 1.5H6.5L9.5 4.5V14.5H1Z" fill="#bdbdbd"/><path d="M6.5 1.5V4.5H9.5" fill="#777"/><path d="M10 8L15 12.5L12.2 12.8L13.5 15.5L12 16L10.8 13.3L10 15Z" fill="#d8d8d8"/></svg>
<svg style="position:absolute;left:5px;top:171px;" width="22" height="15" viewBox="0 0 22 15"><rect x="1" y="0.5" width="1.6" height="14" fill="#c9c9c9"/><rect x="19" y="0.5" width="1.6" height="14" fill="#c9c9c9"/><path d="M4 7.5H18M7 4.5L4 7.5L7 10.5M15 4.5L18 7.5L15 10.5" stroke="#c9c9c9" stroke-width="1.4" fill="none"/></svg>
<svg style="position:absolute;left:8px;top:191px;" width="16" height="14" viewBox="0 0 16 14"><path d="M4 1L9 5.5M9 2.5V5.5H6" stroke="#c9c9c9" stroke-width="1.2" fill="none"/><path d="M1.5 7V12.5H14.5V7" stroke="#c9c9c9" stroke-width="1.4" stroke-dasharray="1.6 2.2" fill="none"/></svg>
<div style="position:absolute;left:2px;top:207px;width:29px;height:1px;background:#3a3a3a"></div>
<div style="position:absolute;left:2px;top:208px;width:29px;height:1px;background:#565656"></div>
<div style="position:absolute;left:4px;top:218px;width:24px;height:19px;background:#303030;box-shadow:inset 0 0 0 1px #383838"></div>
<svg style="position:absolute;left:8px;top:219px;" width="16" height="17" viewBox="0 0 16 17"><text x="1.5" y="15" font-family="Liberation Serif" font-size="19" fill="#d0d0d0">T</text></svg>
<svg style="position:absolute;left:23px;top:232px;" width="4" height="4" viewBox="0 0 4 4"><path d="M4 0V4H0Z" fill="#e0e0e0"/></svg>
<svg style="position:absolute;left:8px;top:242px;" width="16" height="14" viewBox="0 0 16 14"><path d="M1 13L15 1" stroke="#c9c9c9" stroke-width="1.3"/></svg>
<svg style="position:absolute;left:7px;top:260px;" width="19" height="19" viewBox="0 0 19 19"><path d="M12 2L17 6.5L9 14.5L3 16L4.5 10Z" fill="#bcbcbc"/><path d="M3 16L8 11" stroke="#4a4a4a" stroke-width="1.2"/><circle cx="8.5" cy="10.5" r="1.3" fill="#4a4a4a"/><path d="M11.5 2.5L16.5 7" stroke="#e0e0e0" stroke-width="2.2"/></svg>
<svg style="position:absolute;left:23px;top:274px;" width="4" height="4" viewBox="0 0 4 4"><path d="M4 0V4H0Z" fill="#e0e0e0"/></svg>
<svg style="position:absolute;left:7px;top:283px;" width="19" height="17" viewBox="0 0 19 17"><path d="M13 1.5L16.5 5L7 14.5L2 16L3.5 11Z" fill="#bcbcbc"/><path d="M3.5 11L7 14.5" stroke="#777" stroke-width="1"/><path d="M12 2.5L15.5 6" stroke="#888" stroke-width="1.2"/></svg>
<svg style="position:absolute;left:23px;top:296px;" width="4" height="4" viewBox="0 0 4 4"><path d="M4 0V4H0Z" fill="#e0e0e0"/></svg>
<svg style="position:absolute;left:8px;top:305px;" width="16" height="15" viewBox="0 0 16 15"><rect x="1" y="1" width="13.5" height="12.5" fill="none" stroke="#c9c9c9" stroke-width="1.3"/><path d="M1 1L14.5 13.5M14.5 1L1 13.5" stroke="#c9c9c9" stroke-width="1"/></svg>
<svg style="position:absolute;left:23px;top:316px;" width="4" height="4" viewBox="0 0 4 4"><path d="M4 0V4H0Z" fill="#e0e0e0"/></svg>
<svg style="position:absolute;left:8px;top:326px;" width="16" height="15" viewBox="0 0 16 15"><defs><linearGradient id="g1" x1="0" y1="0" x2="1" y2="1"><stop offset="0" stop-color="#777"/><stop offset="1" stop-color="#999"/></linearGradient></defs><rect x="1" y="1" width="13.5" height="12.5" fill="url(#g1)" stroke="#c9c9c9" stroke-width="1.3"/></svg>
<svg style="position:absolute;left:23px;top:337px;" width="4" height="4" viewBox="0 0 4 4"><path d="M4 0V4H0Z" fill="#e0e0e0"/></svg>
<div style="position:absolute;left:2px;top:347px;width:29px;height:1px;background:#3a3a3a"></div>
<div style="position:absolute;left:2px;top:348px;width:29px;height:1px;background:#565656"></div>
<svg style="position:absolute;left:7px;top:352px;" width="18" height="16" viewBox="0 0 18 16"><circle cx="14" cy="4" r="2.6" fill="none" stroke="#c9c9c9" stroke-width="1.4"/><circle cx="14" cy="12" r="2.6" fill="none" stroke="#c9c9c9" stroke-width="1.4"/><path d="M1 3L12 10.5M1 13L12 5.5" stroke="#c9c9c9" stroke-width="1.3"/></svg>
<svg style="position:absolute;left:6px;top:373px;" width="20" height="17" viewBox="0 0 20 17"><rect x="6" y="1" width="11" height="10" fill="#777" stroke="#c9c9c9" stroke-width="1.1"/><rect x="1.5" y="6" width="9" height="9" fill="none" stroke="#c9c9c9" stroke-width="1.1"/><path d="M10 7L15 2.5M12 2.5H15V5.5" stroke="#e0e0e0" stroke-width="1.1" fill="none"/></svg>
<svg style="position:absolute;left:23px;top:386px;" width="4" height="4" viewBox="0 0 4 4"><path d="M4 0V4H0Z" fill="#e0e0e0"/></svg>
<svg style="position:absolute;left:7px;top:396px;" width="18" height="14" viewBox="0 0 18 14"><defs><linearGradient id="g2"><stop offset="0" stop-color="#555"/><stop offset="1" stop-color="#ddd"/></linearGradient></defs><rect x="1.5" y="1" width="15" height="11" fill="url(#g2)" stroke="#c9c9c9" stroke-width="1"/></svg>
<svg style="position:absolute;left:7px;top:417px;" width="18" height="15" viewBox="0 0 18 15"><rect x="0.5" y="0.5" width="16" height="13" fill="none" stroke="#c9c9c9"/><rect x="1" y="1" width="3" height="3" fill="#e0e0e0"/><rect x="4" y="1" width="3" height="3" fill="#9a9a9a"/><rect x="7" y="1" width="3" height="3" fill="#e0e0e0"/><rect x="10" y="1" width="3" height="3" fill="#9a9a9a"/><rect x="13" y="1" width="3" height="3" fill="#e0e0e0"/><rect x="1" y="4" width="3" height="3" fill="#555"/><rect x="4" y="4" width="3" height="3" fill="#cfcfcf"/><rect x="7" y="4" width="3" height="3" fill="#555"/><rect x="10" y="4" width="3" height="3" fill="#cfcfcf"/><rect x="13" y="4" width="3" height="3" fill="#555"/><rect x="1" y="7" width="3" height="3" fill="#b8b8b8"/><rect x="4" y="7" width="3" height="3" fill="#444"/><rect x="7" y="7" width="3" height="3" fill="#b8b8b8"/><rect x="10" y="7" width="3" height="3" fill="#444"/><rect x="13" y="7" width="3" height="3" fill="#b8b8b8"/><rect x="1" y="10" width="3" height="3" fill="#777"/><rect x="4" y="10" width="3" height="3" fill="#a0a0a0"/><rect x="7" y="10" width="3" height="3" fill="#777"/><rect x="10" y="10" width="3" height="3" fill="#a0a0a0"/><rect x="13" y="10" width="3" height="3" fill="#777"/></svg>
<div style="position:absolute;left:2px;top:437px;width:29px;height:1px;background:#3a3a3a"></div>
<div style="position:absolute;left:2px;top:438px;width:29px;height:1px;background:#565656"></div>
<svg style="position:absolute;left:8px;top:444px;" width="17" height="16" viewBox="0 0 17 16"><path d="M1 1H14.5V10L10 14.5H1Z" fill="#c4c4c4"/><path d="M3.5 4.5H12M3.5 7H12M3.5 9.5H8" stroke="#444" stroke-width="1.2"/><path d="M10 14.5V10H14.5" fill="#555"/></svg>
<svg style="position:absolute;left:7px;top:464px;" width="18" height="17" viewBox="0 0 18 17"><path d="M13.5 1.5L16 4L13.5 6.5L11 4Z" fill="#d0d0d0"/><path d="M11 5L2.5 13.5L2 16L4.5 15.5L13 7" fill="none" stroke="#c9c9c9" stroke-width="1.3"/></svg>
<svg style="position:absolute;left:23px;top:477px;" width="4" height="4" viewBox="0 0 4 4"><path d="M4 0V4H0Z" fill="#e0e0e0"/></svg>
<svg style="position:absolute;left:6px;top:485px;" width="20" height="18" viewBox="0 0 20 18"><path d="M5.5 16.5C4 14 1.5 11.5 1.2 10C1 8.8 2.5 8.3 3.5 9.2L5 10.8V3.5C5 2.3 7 2.3 7 3.5V8.5V2C7 0.8 9 0.8 9 2V8.5V2.5C9 1.3 11 1.3 11 2.5V8.5V3.8C11 2.6 13 2.6 13 3.8V9.5V6C13 4.8 15 4.8 15 6V11.5C15 13.5 14 15.5 12.5 16.5Z" fill="#c4c4c4"/></svg>
<svg style="position:absolute;left:7px;top:506px;" width="18" height="17" viewBox="0 0 18 17"><circle cx="7" cy="6.5" r="5" fill="#888" stroke="#c9c9c9" stroke-width="1.5"/><path d="M10.5 10L15.5 15" stroke="#c9c9c9" stroke-width="2.6" stroke-linecap="round"/></svg>
<div style="position:absolute;left:2px;top:528px;width:29px;height:1px;background:#3a3a3a"></div>
<div style="position:absolute;left:2px;top:529px;width:29px;height:1px;background:#565656"></div>
<svg style="position:absolute;left:5px;top:531px;" width="22" height="22" viewBox="0 0 22 22"><rect x="10" y="9" width="10.5" height="10.5" fill="#222" stroke="#999" stroke-width="1"/><rect x="12.5" y="11.5" width="5.5" height="5.5" fill="none" stroke="#888" stroke-width="1"/><defs><linearGradient id="g3" x1="0" y1="0" x2="1" y2="0.3"><stop offset="0" stop-color="#fff"/><stop offset="1" stop-color="#555"/></linearGradient></defs><rect x="1.5" y="1.5" width="11" height="11" fill="url(#g3)" stroke="#aaa" stroke-width="1"/><path d="M15 1.5C18 1.5 19.5 3 19.5 6M18 4.5L19.5 6.5L21 4.5M16.5 0L15 1.5L16.5 3" stroke="#d8d8d8" fill="none" stroke-width="1"/></svg>
<svg style="position:absolute;left:5px;top:552px;" width="12" height="12" viewBox="0 0 12 12"><rect x="4" y="4" width="7" height="7" fill="#111" stroke="#aaa" stroke-width="1"/><rect x="0.5" y="0.5" width="7" height="7" fill="#fff" stroke="#aaa" stroke-width="1"/><path d="M1 7L7 1" stroke="#e00" stroke-width="1.3"/></svg>
<svg style="position:absolute;left:5px;top:567px;" width="24" height="13" viewBox="0 0 24 13"><rect x="1" y="1" width="9" height="9.5" fill="none" stroke="#c9c9c9" stroke-width="1.2"/><text x="12.5" y="11" font-family="Liberation Serif" font-weight="bold" font-size="13" fill="#c9c9c9">T</text></svg>
<div style="position:absolute;left:2px;top:581px;width:29px;height:1px;background:#3a3a3a"></div>
<div style="position:absolute;left:2px;top:582px;width:29px;height:1px;background:#565656"></div>
<div style="position:absolute;left:4px;top:585px;width:24px;height:20px;background:#353535"></div>
<svg style="position:absolute;left:9px;top:587px;" width="14" height="15" viewBox="0 0 14 15"><defs><linearGradient id="g4"><stop offset="0" stop-color="#fff"/><stop offset="1" stop-color="#444"/></linearGradient></defs><rect x="1" y="1" width="12" height="12" fill="url(#g4)" stroke="#aaa" stroke-width="1"/></svg>
<svg style="position:absolute;left:23px;top:601px;" width="4" height="4" viewBox="0 0 4 4"><path d="M4 0V4H0Z" fill="#e0e0e0"/></svg>
<div style="position:absolute;left:2px;top:608px;width:29px;height:1px;background:#3a3a3a"></div>
<div style="position:absolute;left:2px;top:609px;width:29px;height:1px;background:#565656"></div>
<div style="position:absolute;left:4px;top:613px;width:24px;height:20px;background:#353535"></div>
<svg style="position:absolute;left:10px;top:616px;" width="13" height="13" viewBox="0 0 13 13"><rect x="1" y="1" width="11" height="11" fill="none" stroke="#c9c9c9" stroke-width="1.2"/><path d="M1 3.5H12" stroke="#c9c9c9"/><rect x="3" y="5" width="4" height="2.5" fill="#ddd"/><rect x="6.5" y="7" width="4" height="3" fill="#ddd"/></svg>
<svg style="position:absolute;left:23px;top:629px;" width="4" height="4" viewBox="0 0 4 4"><path d="M4 0V4H0Z" fill="#e0e0e0"/></svg>
<div style="position:absolute;left:1325px;top:77px;width:43px;height:638px;background:#2a2a2a"></div>
<div style="position:absolute;left:1328px;top:78px;width:37px;height:11px;background:#363636"></div>
<div style="position:absolute;left:1328px;top:90px;width:37px;height:625px;background:#4a4a4a"></div>
<svg style="position:absolute;left:1350px;top:80px;" width="10" height="7" viewBox="0 0 10 7"><path d="M9.5 0.5L6 3.5L9.5 6.5ZM5 0.5L1.5 3.5L5 6.5Z" fill="#aaa"/></svg>
<div style="position:absolute;left:1337px;top:93px;width:1px;height:4px;background:#111"></div>
<div style="position:absolute;left:1339px;top:93px;width:1px;height:4px;background:#111"></div>
<div style="position:absolute;left:1341px;top:93px;width:1px;height:4px;background:#111"></div>
<div style="position:absolute;left:1343px;top:93px;width:1px;height:4px;background:#111"></div>
<div style="position:absolute;left:1345px;top:93px;width:1px;height:4px;background:#111"></div>
<div style="position:absolute;left:1347px;top:93px;width:1px;height:4px;background:#111"></div>
<div style="position:absolute;left:1349px;top:93px;width:1px;height:4px;background:#111"></div>
<div style="position:absolute;left:1351px;top:93px;width:1px;height:4px;background:#111"></div>
<div style="position:absolute;left:1353px;top:93px;width:1px;height:4px;background:#111"></div>
<div style="position:absolute;left:1355px;top:93px;width:1px;height:4px;background:#111"></div>
<svg style="position:absolute;left:1337px;top:104px;" width="21" height="18" viewBox="0 0 21 18"><path d="M2 5L5 2H9.5V15.5H2Z" fill="#bdbdbd"/><path d="M19 5L16 2H11.5V15.5H19Z" fill="#bdbdbd"/><path d="M2 5H5V2Z" fill="#eee"/><path d="M19 5H16V2Z" fill="#eee"/><rect x="10" y="0.5" width="1.2" height="17" fill="#e8e8e8"/></svg>
<svg style="position:absolute;left:1337px;top:131px;" width="21" height="20" viewBox="0 0 21 20"><path d="M10.5 1.5L19 7.5L10.5 13.5L2 7.5Z" fill="#c4c4c4"/><path d="M4 11L10.5 15.5L17 11L19 12.5L10.5 18.5L2 12.5Z" fill="#b8b8b8"/></svg>
<svg style="position:absolute;left:1337px;top:163px;" width="21" height="13" viewBox="0 0 21 13"><path d="M8 2H5C3 2 2 3.5 2 6.5C2 9.5 3 11 5 11H8M13 2H16C18 2 19 3.5 19 6.5C19 9.5 18 11 16 11H13" stroke="#c6c6c6" stroke-width="2.3" fill="none"/><path d="M7 6.5H14" stroke="#c6c6c6" stroke-width="2.3"/></svg>
<div style="position:absolute;left:1328px;top:185px;width:37px;height:1px;background:#2e2e2e"></div>
<div style="position:absolute;left:1328px;top:186px;width:37px;height:1px;background:#555"></div>
<div style="position:absolute;left:1337px;top:190px;width:1px;height:4px;background:#111"></div>
<div style="position:absolute;left:1339px;top:190px;width:1px;height:4px;background:#111"></div>
<div style="position:absolute;left:1341px;top:190px;width:1px;height:4px;background:#111"></div>
<div style="position:absolute;left:1343px;top:190px;width:1px;height:4px;background:#111"></div>
<div style="position:absolute;left:1345px;top:190px;width:1px;height:4px;background:#111"></div>
<div style="position:absolute;left:1347px;top:190px;width:1px;height:4px;background:#111"></div>
<div style="position:absolute;left:1349px;top:190px;width:1px;height:4px;background:#111"></div>
<div style="position:absolute;left:1351px;top:190px;width:1px;height:4px;background:#111"></div>
<div style="position:absolute;left:1353px;top:190px;width:1px;height:4px;background:#111"></div>
<div style="position:absolute;left:1355px;top:190px;width:1px;height:4px;background:#111"></div>
<svg style="position:absolute;left:1338px;top:201px;" width="19" height="17" viewBox="0 0 19 17"><rect x="0.5" y="1" width="17.5" height="1.3" fill="#c8c8c8"/><rect x="0.5" y="6" width="17.5" height="2.2" fill="#c8c8c8"/><rect x="0.5" y="12" width="17.5" height="3.4" fill="#c8c8c8"/></svg>
<svg style="position:absolute;left:1338px;top:232px;" width="18" height="13" viewBox="0 0 18 13"><rect x="0" y="0" width="17" height="12" fill="#cfcfcf"/><rect x="1" y="1" width="4" height="4" fill="#1e1e1e"/><rect x="6" y="1" width="5" height="4" fill="#444"/><rect x="12" y="1" width="4" height="4" fill="#8a8a8a"/><rect x="1" y="6" width="4" height="5" fill="#777"/><rect x="6" y="6" width="5" height="5" fill="#666"/><rect x="12" y="6" width="4" height="5" fill="#333"/></svg>
<svg style="position:absolute;left:1338px;top:258px;" width="19" height="15" viewBox="0 0 19 15"><defs><linearGradient id="g5"><stop offset="0" stop-color="#333"/><stop offset="1" stop-color="#ddd"/></linearGradient></defs><rect x="0.8" y="0.8" width="16.5" height="12.5" fill="url(#g5)" stroke="#c8c8c8" stroke-width="1.3"/></svg>
<svg style="position:absolute;left:1336px;top:286px;" width="23" height="17" viewBox="0 0 23 17"><path d="M5.5 15.8C2.8 15.8 1 13.8 1 11.3C1 8.9 2.8 7 5.2 6.9C6 3.6 8.8 1.2 12.3 1.2C16.2 1.2 19.3 4.2 19.6 7.9C21.1 8.7 22 10.1 22 11.8C22 14.1 20.1 15.8 17.7 15.8Z" fill="#9a9a9a" stroke="#c8c8c8" stroke-width="1.6"/><path d="M12 13.8C10.4 15.2 8.6 15.3 7.3 14.6C5.6 13.6 5.2 11.3 6.4 9.8C7.6 8.3 9.9 8.2 11.5 9.6L14.2 12C15.8 13.4 18.1 13.3 19.2 11.8C20.3 10.3 19.8 8 18.1 7C16.6 6.2 14.6 6.5 13.1 8" fill="none" stroke="#c8c8c8" stroke-width="1.6"/></svg>
<div style="position:absolute;left:1328px;top:311px;width:37px;height:1px;background:#2e2e2e"></div>
<div style="position:absolute;left:1328px;top:312px;width:37px;height:1px;background:#555"></div>
<div style="position:absolute;left:1337px;top:315px;width:1px;height:4px;background:#111"></div>
<div style="position:absolute;left:1339px;top:315px;width:1px;height:4px;background:#111"></div>
<div style="position:absolute;left:1341px;top:315px;width:1px;height:4px;background:#111"></div>
<div style="position:absolute;left:1343px;top:315px;width:1px;height:4px;background:#111"></div>
<div style="position:absolute;left:1345px;top:315px;width:1px;height:4px;background:#111"></div>
<div style="position:absolute;left:1347px;top:315px;width:1px;height:4px;background:#111"></div>
<div style="position:absolute;left:1349px;top:315px;width:1px;height:4px;background:#111"></div>
<div style="position:absolute;left:1351px;top:315px;width:1px;height:4px;background:#111"></div>
<div style="position:absolute;left:1353px;top:315px;width:1px;height:4px;background:#111"></div>
<div style="position:absolute;left:1355px;top:315px;width:1px;height:4px;background:#111"></div>
<div style="position:absolute;left:1339.5px;top:325.92px;font-size:19px;line-height:19px;color:#c6c6c6;font-weight:normal;letter-spacing:0px;white-space:pre;font-style:italic;font-family:'Liberation Serif'">fx</div>
<svg style="position:absolute;left:1337px;top:355px;" width="21" height="18" viewBox="0 0 21 18"><rect x="7.5" y="1.5" width="12" height="12" fill="#7a7a7a" stroke="#c8c8c8" stroke-width="1.2"/><path d="M7 5H10V2" stroke="#4a4a4a" fill="none"/><rect x="1" y="8" width="6" height="6" fill="#4a4a4a" stroke="#d8d8d8" stroke-width="1.2"/><rect x="4" y="11" width="6" height="5.5" fill="#4a4a4a" stroke="#d8d8d8" stroke-width="1.2"/></svg>
<div style="position:absolute;left:1328px;top:380px;width:37px;height:1px;background:#2e2e2e"></div>
<div style="position:absolute;left:1328px;top:381px;width:37px;height:1px;background:#555"></div>
<div style="position:absolute;left:1337px;top:384px;width:1px;height:4px;background:#111"></div>
<div style="position:absolute;left:1339px;top:384px;width:1px;height:4px;background:#111"></div>
<div style="position:absolute;left:1341px;top:384px;width:1px;height:4px;background:#111"></div>
<div style="position:absolute;left:1343px;top:384px;width:1px;height:4px;background:#111"></div>
<div style="position:absolute;left:1345px;top:384px;width:1px;height:4px;background:#111"></div>
<div style="position:absolute;left:1347px;top:384px;width:1px;height:4px;background:#111"></div>
<div style="position:absolute;left:1349px;top:384px;width:1px;height:4px;background:#111"></div>
<div style="position:absolute;left:1351px;top:384px;width:1px;height:4px;background:#111"></div>
<div style="position:absolute;left:1353px;top:384px;width:1px;height:4px;background:#111"></div>
<div style="position:absolute;left:1355px;top:384px;width:1px;height:4px;background:#111"></div>
<svg style="position:absolute;left:1337px;top:395px;" width="21" height="18" viewBox="0 0 21 18"><path d="M12.5 1.5H19V16M16.5 1.5V16" stroke="#c8c8c8" stroke-width="1.4" fill="none"/><path d="M15 1.5C11.5 1.5 10.5 3 10.5 5C10.5 7 11.5 8.5 15 8.5Z" fill="#c8c8c8"/><rect x="1" y="9" width="6" height="6" fill="#4a4a4a" stroke="#d8d8d8" stroke-width="1.2"/><rect x="4" y="12" width="6" height="5" fill="#4a4a4a" stroke="#d8d8d8" stroke-width="1.2"/></svg>
<div style="position:absolute;left:1328px;top:421px;width:37px;height:1px;background:#2e2e2e"></div>
<div style="position:absolute;left:1328px;top:422px;width:37px;height:1px;background:#555"></div>
<div style="position:absolute;left:1337px;top:425px;width:1px;height:4px;background:#111"></div>
<div style="position:absolute;left:1339px;top:425px;width:1px;height:4px;background:#111"></div>
<div style="position:absolute;left:1341px;top:425px;width:1px;height:4px;background:#111"></div>
<div style="position:absolute;left:1343px;top:425px;width:1px;height:4px;background:#111"></div>
<div style="position:absolute;left:1345px;top:425px;width:1px;height:4px;background:#111"></div>
<div style="position:absolute;left:1347px;top:425px;width:1px;height:4px;background:#111"></div>
<div style="position:absolute;left:1349px;top:425px;width:1px;height:4px;background:#111"></div>
<div style="position:absolute;left:1351px;top:425px;width:1px;height:4px;background:#111"></div>
<div style="position:absolute;left:1353px;top:425px;width:1px;height:4px;background:#111"></div>
<div style="position:absolute;left:1355px;top:425px;width:1px;height:4px;background:#111"></div>
<svg style="position:absolute;left:1337px;top:435px;" width="22" height="18" viewBox="0 0 22 18"><text x="8" y="13" font-family="Liberation Sans" font-size="15" fill="#c8c8c8">A</text><rect x="1" y="9" width="6" height="6" fill="#4a4a4a" stroke="#d8d8d8" stroke-width="1.2"/><rect x="4" y="12" width="6" height="5" fill="#4a4a4a" stroke="#d8d8d8" stroke-width="1.2"/></svg>
<div style="position:absolute;left:1328px;top:462px;width:37px;height:1px;background:#2e2e2e"></div>
<div style="position:absolute;left:1328px;top:463px;width:37px;height:1px;background:#555"></div>
<div style="position:absolute;left:1337px;top:466px;width:1px;height:4px;background:#111"></div>
<div style="position:absolute;left:1339px;top:466px;width:1px;height:4px;background:#111"></div>
<div style="position:absolute;left:1341px;top:466px;width:1px;height:4px;background:#111"></div>
<div style="position:absolute;left:1343px;top:466px;width:1px;height:4px;background:#111"></div>
<div style="position:absolute;left:1345px;top:466px;width:1px;height:4px;background:#111"></div>
<div style="position:absolute;left:1347px;top:466px;width:1px;height:4px;background:#111"></div>
<div style="position:absolute;left:1349px;top:466px;width:1px;height:4px;background:#111"></div>
<div style="position:absolute;left:1351px;top:466px;width:1px;height:4px;background:#111"></div>
<div style="position:absolute;left:1353px;top:466px;width:1px;height:4px;background:#111"></div>
<div style="position:absolute;left:1355px;top:466px;width:1px;height:4px;background:#111"></div>
<svg style="position:absolute;left:1336px;top:476px;" width="22" height="19" viewBox="0 0 22 19"><rect x="9" y="1" width="12" height="11" fill="#888" stroke="#c8c8c8" stroke-width="1.2"/><path d="M12 6L14.5 8.5L19 3" stroke="#eee" stroke-width="1.4" fill="none"/><circle cx="7" cy="8" r="3.3" fill="#c8c8c8"/><path d="M1 17.5C1 13.5 3 12 7 12C11 12 13 13.5 13 17.5Z" fill="#c8c8c8"/></svg>
<svg style="position:absolute;left:1338px;top:505px;" width="18" height="19" viewBox="0 0 18 19"><path d="M1 1H15V12L10 17H1Z" fill="#c4c4c4"/><path d="M3.5 4.5H12.5M3.5 7.5H12.5M3.5 10.5H9" stroke="#444" stroke-width="1.3"/><path d="M10 17V12H15Z" fill="#555"/></svg>
<svg style="position:absolute;left:1336px;top:532px;" width="22" height="21" viewBox="0 0 22 21"><path d="M1 1H15V8L9 14H1Z" fill="#c4c4c4"/><path d="M3.5 4H12.5M3.5 7H12.5M3.5 10H8" stroke="#444" stroke-width="1.3"/><path d="M19 7L21 9L10 20L7.5 20.5L8 18Z" fill="#c8c8c8" stroke="#4a4a4a" stroke-width="0.8"/></svg>
<div style="position:absolute;left:1328px;top:558px;width:37px;height:1px;background:#2e2e2e"></div>
<div style="position:absolute;left:1328px;top:559px;width:37px;height:1px;background:#555"></div>
<div style="position:absolute;left:373px;top:88px;width:883px;height:627px;background:#f9f9f9;box-shadow:inset 1px 0 0 #9a9a9a, inset -1px 0 0 #9a9a9a, inset 0 1px 0 #9a9a9a"></div>
<div style="position:absolute;left:514.3px;width:600px;text-align:center;top:96.90px;font-size:14.3px;line-height:14.3px;color:#1a1a1a;font-weight:normal;letter-spacing:0px;white-space:pre;">Preferencias</div>
<div style="position:absolute;left:381px;top:118px;width:867px;height:597px;background:#4a4a4a"></div>
<div style="position:absolute;left:395px;top:133px;width:225px;height:521px;background:#2c2c2c"></div>
<div style="position:absolute;left:396px;top:134px;width:210px;height:518px;background:#ec9330"></div>
<div style="position:absolute;left:397px;top:135px;width:208px;height:516px;background:#4a4a4a"></div>
<div style="position:absolute;left:606px;top:134px;width:13px;height:519px;background:#383838"></div>
<svg style="position:absolute;left:609px;top:138px;" width="8" height="5" viewBox="0 0 8 5"><path d="M0 4.5H7.5L3.75 0.5Z" fill="#9a9a9a"/></svg>
<svg style="position:absolute;left:609px;top:645px;" width="8" height="5" viewBox="0 0 8 5"><path d="M0 0.5H7.5L3.75 4.5Z" fill="#9a9a9a"/></svg>
<div style="position:absolute;left:397px;top:149px;width:208px;height:1px;background:#333"></div>
<div style="position:absolute;left:399px;top:137.94px;font-size:10px;line-height:10px;color:#d4d4d4;font-weight:normal;letter-spacing:-0.45px;white-space:pre;">General</div>
<div style="position:absolute;left:397px;top:165px;width:208px;height:1px;background:#333"></div>
<div style="position:absolute;left:399px;top:153.94px;font-size:10px;line-height:10px;color:#d4d4d4;font-weight:normal;letter-spacing:-0.45px;white-space:pre;">Interfaz</div>
<div style="position:absolute;left:397px;top:181px;width:208px;height:1px;background:#333"></div>
<div style="position:absolute;left:399px;top:169.94px;font-size:10px;line-height:10px;color:#d4d4d4;font-weight:normal;letter-spacing:-0.45px;white-space:pre;">Escala de IU</div>
<div style="position:absolute;left:397px;top:197px;width:208px;height:1px;background:#333"></div>
<div style="position:absolute;left:399px;top:185.94px;font-size:10px;line-height:10px;color:#d4d4d4;font-weight:normal;letter-spacing:-0.45px;white-space:pre;">Texto</div>
<div style="position:absolute;left:397px;top:213px;width:208px;height:1px;background:#333"></div>
<div style="position:absolute;left:399px;top:201.94px;font-size:10px;line-height:10px;color:#d4d4d4;font-weight:normal;letter-spacing:-0.45px;white-space:pre;">Texto avanzado</div>
<div style="position:absolute;left:397px;top:229px;width:208px;height:1px;background:#333"></div>
<div style="position:absolute;left:399px;top:217.94px;font-size:10px;line-height:10px;color:#d4d4d4;font-weight:normal;letter-spacing:-0.45px;white-space:pre;">Composición</div>
<div style="position:absolute;left:397px;top:245px;width:208px;height:1px;background:#333"></div>
<div style="position:absolute;left:399px;top:233.94px;font-size:10px;line-height:10px;color:#d4d4d4;font-weight:normal;letter-spacing:-0.45px;white-space:pre;">Unidades e incrementos</div>
<div style="position:absolute;left:397px;top:261px;width:208px;height:1px;background:#333"></div>
<div style="position:absolute;left:399px;top:249.93px;font-size:10px;line-height:10px;color:#d4d4d4;font-weight:normal;letter-spacing:-0.45px;white-space:pre;">Cuadrículas</div>
<div style="position:absolute;left:397px;top:277px;width:208px;height:1px;background:#333"></div>
<div style="position:absolute;left:399px;top:265.94px;font-size:10px;line-height:10px;color:#d4d4d4;font-weight:normal;letter-spacing:-0.45px;white-space:pre;">Guías y mesa de trabajo</div>
<div style="position:absolute;left:397px;top:293px;width:208px;height:1px;background:#333"></div>
<div style="position:absolute;left:399px;top:281.94px;font-size:10px;line-height:10px;color:#d4d4d4;font-weight:normal;letter-spacing:-0.45px;white-space:pre;">Diccionario</div>
<div style="position:absolute;left:397px;top:309px;width:208px;height:1px;background:#333"></div>
<div style="position:absolute;left:399px;top:297.94px;font-size:10px;line-height:10px;color:#d4d4d4;font-weight:normal;letter-spacing:-0.45px;white-space:pre;">Ortografía</div>
<div style="position:absolute;left:397px;top:325px;width:208px;height:1px;background:#333"></div>
<div style="position:absolute;left:399px;top:313.94px;font-size:10px;line-height:10px;color:#d4d4d4;font-weight:normal;letter-spacing:-0.45px;white-space:pre;">Autocorrección</div>
<div style="position:absolute;left:397px;top:341px;width:208px;height:1px;background:#333"></div>
<div style="position:absolute;left:399px;top:329.94px;font-size:10px;line-height:10px;color:#d4d4d4;font-weight:normal;letter-spacing:-0.45px;white-space:pre;">Notas</div>
<div style="position:absolute;left:397px;top:357px;width:208px;height:1px;background:#333"></div>
<div style="position:absolute;left:399px;top:345.94px;font-size:10px;line-height:10px;color:#d4d4d4;font-weight:normal;letter-spacing:-0.45px;white-space:pre;">Control de cambios</div>
<div style="position:absolute;left:397px;top:373px;width:208px;height:1px;background:#333"></div>
<div style="position:absolute;left:399px;top:361.94px;font-size:10px;line-height:10px;color:#d4d4d4;font-weight:normal;letter-spacing:-0.45px;white-space:pre;">Vista de editor de artículos</div>
<div style="position:absolute;left:397px;top:374px;width:208px;height:16px;background:#4b5566"></div>
<div style="position:absolute;left:397px;top:389px;width:208px;height:1px;background:#333"></div>
<div style="position:absolute;left:399px;top:377.94px;font-size:10px;line-height:10px;color:#ffffff;font-weight:normal;letter-spacing:-0.45px;white-space:pre;">Rendimiento de visualización</div>
<div style="position:absolute;left:397px;top:405px;width:208px;height:1px;background:#333"></div>
<div style="position:absolute;left:399px;top:393.94px;font-size:10px;line-height:10px;color:#d4d4d4;font-weight:normal;letter-spacing:-0.45px;white-space:pre;">Apariencia de negro</div>
<div style="position:absolute;left:397px;top:421px;width:208px;height:1px;background:#333"></div>
<div style="position:absolute;left:399px;top:409.94px;font-size:10px;line-height:10px;color:#d4d4d4;font-weight:normal;letter-spacing:-0.45px;white-space:pre;">Administración de archivos</div>
<div style="position:absolute;left:397px;top:437px;width:208px;height:1px;background:#333"></div>
<div style="position:absolute;left:399px;top:425.94px;font-size:10px;line-height:10px;color:#d4d4d4;font-weight:normal;letter-spacing:-0.45px;white-space:pre;">Administración del portapapeles</div>
<div style="position:absolute;left:397px;top:453px;width:208px;height:1px;background:#333"></div>
<div style="position:absolute;left:399px;top:441.94px;font-size:10px;line-height:10px;color:#d4d4d4;font-weight:normal;letter-spacing:-0.45px;white-space:pre;">Previsualizaciones de tecnología</div>
<div style="position:absolute;left:625px;top:138.92px;font-size:12.5px;line-height:12.5px;color:#d9d9d9;font-weight:normal;letter-spacing:0px;white-space:pre;">Rendimiento de visualización</div>
<div style="position:absolute;left:624px;top:154px;width:604px;height:1px;background:#383838"></div>
<div style="position:absolute;left:624px;top:155px;width:604px;height:1px;background:#5e5e5e"></div>
<div style="position:absolute;left:640px;top:176px;width:9px;height:1px;background:#262626"></div>
<div style="position:absolute;left:712px;top:176px;width:499px;height:1px;background:#262626"></div>
<div style="position:absolute;left:640px;top:176px;width:1px;height:71px;background:#262626"></div>
<div style="position:absolute;left:1211px;top:176px;width:1px;height:72px;background:#262626"></div>
<div style="position:absolute;left:640px;top:247px;width:571px;height:1px;background:#262626"></div>
<div style="position:absolute;left:641px;top:177px;width:8px;height:1px;background:#5a5a5a"></div>
<div style="position:absolute;left:712px;top:177px;width:499px;height:1px;background:#5a5a5a"></div>
<div style="position:absolute;left:641px;top:177px;width:1px;height:70px;background:#5a5a5a"></div>
<div style="position:absolute;left:1212px;top:176px;width:1px;height:73px;background:#5a5a5a"></div>
<div style="position:absolute;left:640px;top:248px;width:573px;height:1px;background:#5a5a5a"></div>
<div style="position:absolute;left:640px;top:265px;width:9px;height:1px;background:#262626"></div>
<div style="position:absolute;left:898px;top:265px;width:313px;height:1px;background:#262626"></div>
<div style="position:absolute;left:640px;top:265px;width:1px;height:230px;background:#262626"></div>
<div style="position:absolute;left:1211px;top:265px;width:1px;height:231px;background:#262626"></div>
<div style="position:absolute;left:640px;top:495px;width:571px;height:1px;background:#262626"></div>
<div style="position:absolute;left:641px;top:266px;width:8px;height:1px;background:#5a5a5a"></div>
<div style="position:absolute;left:898px;top:266px;width:313px;height:1px;background:#5a5a5a"></div>
<div style="position:absolute;left:641px;top:266px;width:1px;height:229px;background:#5a5a5a"></div>
<div style="position:absolute;left:1212px;top:265px;width:1px;height:232px;background:#5a5a5a"></div>
<div style="position:absolute;left:640px;top:496px;width:573px;height:1px;background:#5a5a5a"></div>
<div style="position:absolute;left:654px;top:171.42px;font-size:12.5px;line-height:12.5px;color:#d9d9d9;font-weight:normal;letter-spacing:0px;white-space:pre;">Opciones</div>
<div style="position:absolute;left:653px;top:193.42px;font-size:12.5px;line-height:12.5px;color:#d9d9d9;font-weight:normal;letter-spacing:0px;white-space:pre;">Vista por defecto:</div>
<div style="position:absolute;left:759px;top:189px;width:113px;height:18px;background:#242424"></div>
<div style="position:absolute;left:760px;top:190px;width:111px;height:16px;background:linear-gradient(#5e5e5e,#525252)"></div>
<div style="position:absolute;left:855px;top:192px;width:1px;height:12px;background:#2e2e2e"></div>
<div style="position:absolute;left:856px;top:192px;width:1px;height:12px;background:#6a6a6a"></div>
<svg style="position:absolute;left:861px;top:195px;" width="7" height="6" viewBox="0 0 7 6"><path d="M0 0.5H7L3.5 5.5Z" fill="#e4e4e4"/></svg>
<div style="position:absolute;left:764px;top:192.92px;font-size:12.5px;line-height:12.5px;color:#e2e2e2;font-weight:normal;letter-spacing:0px;white-space:pre;">Típica</div>
<div style="position:absolute;left:652px;top:217px;width:12px;height:12px;background:#2a2a2a"></div>
<div style="position:absolute;left:653px;top:218px;width:10px;height:10px;background:#555"></div>
<div style="position:absolute;left:669.5px;top:218.42px;font-size:12.5px;line-height:12.5px;color:#d9d9d9;font-weight:normal;letter-spacing:0px;white-space:pre;">Conservar configuración de visualización de nivel de objeto</div>
<div style="position:absolute;left:654px;top:259.12px;font-size:12.5px;line-height:12.5px;color:#d9d9d9;font-weight:normal;letter-spacing:0px;white-space:pre;">Ajustar visualización:</div>
<div style="position:absolute;left:779px;top:255px;width:113px;height:18px;background:#242424"></div>
<div style="position:absolute;left:780px;top:256px;width:111px;height:16px;background:linear-gradient(#5e5e5e,#525252)"></div>
<div style="position:absolute;left:875px;top:258px;width:1px;height:12px;background:#2e2e2e"></div>
<div style="position:absolute;left:876px;top:258px;width:1px;height:12px;background:#6a6a6a"></div>
<svg style="position:absolute;left:881px;top:261px;" width="7" height="6" viewBox="0 0 7 6"><path d="M0 0.5H7L3.5 5.5Z" fill="#e4e4e4"/></svg>
<div style="position:absolute;left:784px;top:258.92px;font-size:12.5px;line-height:12.5px;color:#e2e2e2;font-weight:normal;letter-spacing:0px;white-space:pre;">Típica</div>
<div style="position:absolute;left:768px;top:283.38px;font-size:9px;line-height:9px;color:#cfcfcf;font-weight:normal;letter-spacing:0px;white-space:pre;">Mejor rendimiento</div>
<div style="position:absolute;left:930px;top:283.38px;font-size:9px;line-height:9px;color:#cfcfcf;font-weight:normal;letter-spacing:0px;white-space:pre;">Mayor calidad</div>
<div style="position:absolute;left:578px;width:600px;text-align:center;top:303.38px;font-size:9px;line-height:9px;color:#cfcfcf;font-weight:normal;letter-spacing:0px;white-space:pre;">Proxy</div>
<div style="position:absolute;left:655.2px;top:311.42px;font-size:12.5px;line-height:12.5px;color:#d9d9d9;font-weight:normal;letter-spacing:0.1px;white-space:pre;">Imágenes rasterizadas:</div>
<div style="position:absolute;left:799px;top:319px;width:161px;height:1px;background:#111"></div>
<div style="position:absolute;left:799px;top:320px;width:161px;height:1px;background:#5e5e5e"></div>
<div style="position:absolute;left:799px;top:316px;width:1px;height:3px;background:#111"></div>
<div style="position:absolute;left:879px;top:316px;width:1px;height:3px;background:#111"></div>
<div style="position:absolute;left:959px;top:316px;width:1px;height:3px;background:#111"></div>
<svg style="position:absolute;left:874.5px;top:321px;" width="11" height="8" viewBox="0 0 11 8"><path d="M5.5 0.8L10 6.5H1Z" fill="#a8a8a8" stroke="#2a2a2a" stroke-width="0.9"/></svg>
<div style="position:absolute;left:578px;width:600px;text-align:center;top:348.38px;font-size:9px;line-height:9px;color:#cfcfcf;font-weight:normal;letter-spacing:0px;white-space:pre;">Proxy</div>
<div style="position:absolute;right:580.5px;top:356.42px;font-size:12.5px;line-height:12.5px;color:#d9d9d9;font-weight:normal;letter-spacing:0px;white-space:pre;">Gráficos vectoriales:</div>
<div style="position:absolute;left:799px;top:364px;width:161px;height:1px;background:#111"></div>
<div style="position:absolute;left:799px;top:365px;width:161px;height:1px;background:#5e5e5e"></div>
<div style="position:absolute;left:799px;top:361px;width:1px;height:3px;background:#111"></div>
<div style="position:absolute;left:879px;top:361px;width:1px;height:3px;background:#111"></div>
<div style="position:absolute;left:959px;top:361px;width:1px;height:3px;background:#111"></div>
<svg style="position:absolute;left:874.5px;top:366px;" width="11" height="8" viewBox="0 0 11 8"><path d="M5.5 0.8L10 6.5H1Z" fill="#a8a8a8" stroke="#2a2a2a" stroke-width="0.9"/></svg>
<div style="position:absolute;left:578px;width:600px;text-align:center;top:393.38px;font-size:9px;line-height:9px;color:#cfcfcf;font-weight:normal;letter-spacing:0px;white-space:pre;">Calidad media</div>
<div style="position:absolute;right:580.5px;top:401.42px;font-size:12.5px;line-height:12.5px;color:#d9d9d9;font-weight:normal;letter-spacing:0px;white-space:pre;">Transparencia:</div>
<div style="position:absolute;left:799px;top:409px;width:161px;height:1px;background:#111"></div>
<div style="position:absolute;left:799px;top:410px;width:161px;height:1px;background:#5e5e5e"></div>
<div style="position:absolute;left:799px;top:406px;width:1px;height:3px;background:#111"></div>
<div style="position:absolute;left:852px;top:406px;width:1px;height:3px;background:#111"></div>
<div style="position:absolute;left:905px;top:406px;width:1px;height:3px;background:#111"></div>
<div style="position:absolute;left:959px;top:406px;width:1px;height:3px;background:#111"></div>
<svg style="position:absolute;left:900.5px;top:411px;" width="11" height="8" viewBox="0 0 11 8"><path d="M5.5 0.8L10 6.5H1Z" fill="#a8a8a8" stroke="#2a2a2a" stroke-width="0.9"/></svg>
<div style="position:absolute;left:652px;top:440px;width:12px;height:12px;background:#2a2a2a"></div>
<div style="position:absolute;left:653px;top:441px;width:10px;height:10px;background:#555"></div>
<svg style="position:absolute;left:652px;top:439px;" width="13" height="13" viewBox="0 0 13 13"><path d="M2.5 6.5L5.5 10L11 2" stroke="#e8e8e8" stroke-width="1.5" fill="none"/></svg>
<div style="position:absolute;left:669px;top:441.42px;font-size:12.5px;line-height:12.5px;color:#d9d9d9;font-weight:normal;letter-spacing:-0.15px;white-space:pre;">Activar suavizado</div>
<div style="position:absolute;left:997.2px;top:441.42px;font-size:12.5px;line-height:12.5px;color:#d9d9d9;font-weight:normal;letter-spacing:0.14px;white-space:pre;">Simular texto inferior a:</div>
<div style="position:absolute;left:1136px;top:437px;width:54px;height:18px;background:#2a2a2a"></div>
<div style="position:absolute;left:1137px;top:438px;width:52px;height:16px;background:#a6a6a6"></div>
<div style="position:absolute;left:1140px;top:440.92px;font-size:12.5px;line-height:12.5px;color:#111;font-weight:normal;letter-spacing:0px;white-space:pre;">7 pt</div>
<div style="position:absolute;left:846px;top:462px;width:159px;height:18px;background:#202020"></div>
<div style="position:absolute;left:847px;top:463px;width:157px;height:16px;background:linear-gradient(#5c5c5c,#4e4e4e)"></div>
<div style="position:absolute;left:625.5px;width:600px;text-align:center;top:466.02px;font-size:12.5px;line-height:12.5px;color:#e2e2e2;font-weight:normal;letter-spacing:0px;white-space:pre;">Usar valores por defecto</div>
<div style="position:absolute;left:1028px;top:683px;width:90px;height:20px;background:#202020"></div>
<div style="position:absolute;left:1029px;top:684px;width:88px;height:18px;background:#202020"></div>
<div style="position:absolute;left:1030px;top:685px;width:86px;height:16px;background:linear-gradient(#5c5c5c,#4e4e4e)"></div>
<div style="position:absolute;left:773.0px;width:600px;text-align:center;top:688.02px;font-size:12.5px;line-height:12.5px;color:#e2e2e2;font-weight:normal;letter-spacing:0px;white-space:pre;">OK</div>
<div style="position:absolute;left:1129px;top:684px;width:88px;height:18px;background:#202020"></div>
<div style="position:absolute;left:1130px;top:685px;width:86px;height:16px;background:linear-gradient(#5c5c5c,#4e4e4e)"></div>
<div style="position:absolute;left:873.0px;width:600px;text-align:center;top:688.02px;font-size:12.5px;line-height:12.5px;color:#e2e2e2;font-weight:normal;letter-spacing:0px;white-space:pre;">Cancelar</div>
<div style="position:absolute;left:1365px;top:0px;width:1px;height:715px;background:#222"></div>
<div style="position:absolute;left:1366px;top:0px;width:2px;height:715px;background:#fff"></div>
<svg style="position:absolute;left:0px;top:0px;pointer-events:none" width="1368" height="715" viewBox="0 0 1368 715">
<ellipse cx="124.4" cy="16" rx="31.9" ry="13.6" fill="none" stroke="#ed1c24" stroke-width="4.8"/>
<path d="M123.5 42L140 60H131.5V82.2H114.6V60H107Z" fill="none" stroke="#ed1c24" stroke-width="5" stroke-linejoin="round"/>
<ellipse cx="17.8" cy="225.7" rx="16.8" ry="21.1" fill="none" stroke="#ed1c24" stroke-width="4.8"/>
<path d="M354.5 184.5H370V180L384.5 189.5L370 199V194.5H354.5Z" fill="none" stroke="#ed1c24" stroke-width="5" stroke-linejoin="round"/>
<path d="M294 298.5H342V270.5L389 327L342 383.5V355H294Z" fill="none" stroke="#ed1c24" stroke-width="4.6" stroke-linejoin="round"/>
</svg>
<div style="position:absolute;left:69.7px;top:88.77px;font-size:13.5px;line-height:13.5px;color:#ed1c24;font-weight:bold;letter-spacing:0.12px;white-space:pre;">1. Edición &gt; Preferencias</div>
<div style="position:absolute;left:57.6px;top:217.75px;font-size:14px;line-height:14px;color:#ed1c24;font-weight:bold;letter-spacing:0.38px;white-space:pre;">2. Herramienta de texto</div>
<div style="position:absolute;left:57.6px;top:236.57px;font-size:13.5px;line-height:13.5px;color:#ed1c24;font-weight:bold;letter-spacing:0px;white-space:pre;">(Ctrl + K)</div></body></html>
